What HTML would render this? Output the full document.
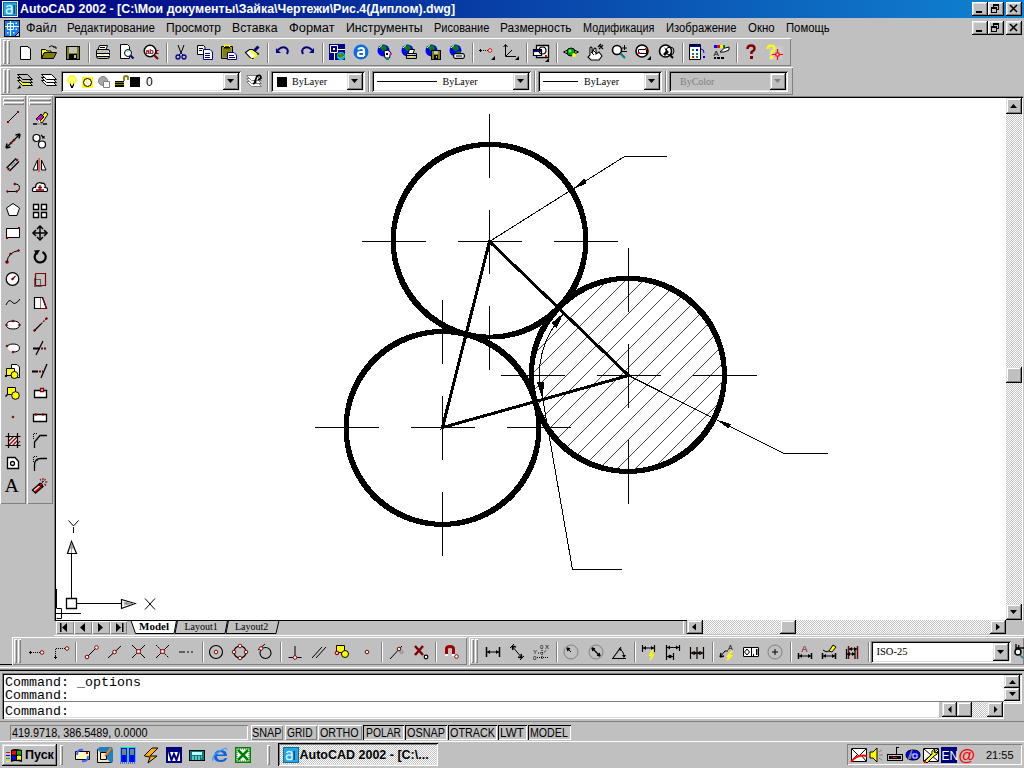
<!DOCTYPE html>
<html><head><meta charset="utf-8">
<style>
*{box-sizing:border-box}
html,body{margin:0;padding:0;width:1024px;height:768px;overflow:hidden;background:#c0c0c0;font-family:"Liberation Sans",sans-serif;font-size:11.5px;color:#000}
.a{position:absolute}
#title{left:0;top:0;width:1024px;height:18px;background:linear-gradient(to right,#000080,#1084d0)}
#ttext{left:20px;top:1px;color:#fff;font-weight:bold;font-size:12.4px;white-space:pre;line-height:16px}
.wb{width:16px;height:14px;background:#c0c0c0;box-shadow:inset -1px -1px #000,inset 1px 1px #fff,inset -2px -2px #808080,inset 2px 2px #dfdfdf}
.menu{top:20.5px;white-space:pre;line-height:14px;font-size:12px;transform-origin:0 0}
.tb{background:#c0c0c0;box-shadow:inset 1px 1px #fff,inset -1px -1px #808080}
.combo{background:#fff;box-shadow:inset 1px 1px #808080,inset -1px -1px #fff,inset 2px 2px #000,inset -2px -2px #dfdfdf}
.dither{background:repeating-conic-gradient(#c0c0c0 0% 25%,#fff 0% 50%) 0 0/2px 2px}
.btn{background:#c0c0c0;box-shadow:inset -1px -1px #000,inset 1px 1px #dfdfdf,inset -2px -2px #808080,inset 2px 2px #fff}
.mono{font-family:"Liberation Mono",monospace}
.sb{height:15px;box-shadow:inset 1px 1px #fff,inset -1px -1px #808080;font-size:10.75px;line-height:16px;text-align:center;white-space:pre}
.sbp{height:15px;box-shadow:inset 1px 1px #000,inset -1px -1px #fff;font-size:10.75px;line-height:16px;text-align:center;white-space:pre}
svg{position:absolute;overflow:visible}
</style></head><body>
<div id="title" class="a"></div>
<div class="a " style="left:2px;top:1px;width:16px;height:16px;background:#fff"></div>
<div id="ttext" class="a">AutoCAD 2002 - [C:\Мои документы\Зайка\Чертежи\Рис.4(Диплом).dwg]</div>
<div class="a wb" style="left:972px;top:2px;width:16px;height:14px;"></div>
<div class="a wb" style="left:988px;top:2px;width:16px;height:14px;"></div>
<div class="a wb" style="left:1006px;top:2px;width:16px;height:14px;"></div>
<div class="a menu" style="left:25.5px;transform:scaleX(1.044)">Файл</div>
<div class="a menu" style="left:67.0px;transform:scaleX(0.962)">Редактирование</div>
<div class="a menu" style="left:166.0px;transform:scaleX(1.005)">Просмотр</div>
<div class="a menu" style="left:232.2px;transform:scaleX(1.020)">Вставка</div>
<div class="a menu" style="left:289.3px;transform:scaleX(1.070)">Формат</div>
<div class="a menu" style="left:345.9px;transform:scaleX(1.024)">Инструменты</div>
<div class="a menu" style="left:433.5px;transform:scaleX(0.914)">Рисование</div>
<div class="a menu" style="left:500.2px;transform:scaleX(0.989)">Размерность</div>
<div class="a menu" style="left:583.2px;transform:scaleX(0.904)">Модификация</div>
<div class="a menu" style="left:666.2px;transform:scaleX(0.933)">Изображение</div>
<div class="a menu" style="left:748.3px;transform:scaleX(0.953)">Окно</div>
<div class="a menu" style="left:786.0px;transform:scaleX(0.942)">Помощь</div>
<div class="a wb" style="left:972px;top:21px;width:16px;height:14px;"></div>
<div class="a wb" style="left:988px;top:21px;width:16px;height:14px;"></div>
<div class="a wb" style="left:1006px;top:21px;width:16px;height:14px;"></div>
<div class="a tb" style="left:0px;top:38px;width:791px;height:28px;"></div>
<div class="a tb" style="left:0px;top:67px;width:793px;height:28px;"></div>
<div class="a tb" style="left:0px;top:95px;width:26px;height:409px;"></div>
<div class="a tb" style="left:27px;top:95px;width:26px;height:409px;"></div>
<div class="a " style="left:54px;top:96px;width:969px;height:525px;background:#fff;box-shadow:inset 1px 1px #808080,inset 2px 2px #000"></div>
<div class="a dither" style="left:1006px;top:98px;width:16px;height:522px;"></div>
<div class="a btn" style="left:1006px;top:98px;width:16px;height:16px;"></div>
<div class="a btn" style="left:1006px;top:367px;width:16px;height:16px;"></div>
<div class="a btn" style="left:1006px;top:604px;width:16px;height:16px;"></div>
<svg class="a" style="left:1006px;top:98px" width="16" height="522"><path d="M4 10h7l-3.5-4z" fill="#000"/><path d="M4 512h7l-3.5 4z" fill="#000"/></svg>
<div class="a " style="left:56px;top:620px;width:950px;height:1px;background:#000"></div>
<div class="a " style="left:56px;top:621px;width:627px;height:13px;background:#c0c0c0"></div>
<div class="a " style="left:56px;top:621px;width:18px;height:13px;background:#c0c0c0;box-shadow:inset 1px 1px #fff,inset -1px -1px #808080"></div>
<div class="a " style="left:74px;top:621px;width:18px;height:13px;background:#c0c0c0;box-shadow:inset 1px 1px #fff,inset -1px -1px #808080"></div>
<div class="a " style="left:92px;top:621px;width:18px;height:13px;background:#c0c0c0;box-shadow:inset 1px 1px #fff,inset -1px -1px #808080"></div>
<div class="a " style="left:110px;top:621px;width:17px;height:13px;background:#c0c0c0;box-shadow:inset 1px 1px #fff,inset -1px -1px #808080"></div>
<svg class="a" style="left:56px;top:621px" width="72" height="13"><g fill="#000"><rect x="4" y="2" width="1.5" height="9"/><path d="M11 2v9l-5-4.5z"/><path d="M29 2v9l-5-4.5z"/><path d="M42 2v9l5-4.5z"/><path d="M60 2v9l5-4.5z"/><rect x="66" y="2" width="1.5" height="9"/></g></svg>
<svg class="a" style="left:126px;top:619px" width="160" height="16">
<path d="M51.5 1.5H101.5L99 14.5H49Z" fill="#c0c0c0" stroke="#000"/>
<path d="M102.5 1.5H153L150 14.5H100Z" fill="#c0c0c0" stroke="#000"/>
<path d="M5 1.5H50.5L48 14.5H9.5Z" fill="#fff" stroke="#000"/>
</svg>
<div class="a" style="left:139px;top:620px;white-space:pre;font-family:'Liberation Serif',serif;font-weight:bold;font-size:11px;line-height:12px">Model</div>
<div class="a" style="left:184.5px;top:620.5px;white-space:pre;font-family:'Liberation Serif',serif;font-size:10px;line-height:12px">Layout1</div>
<div class="a" style="left:235px;top:620.5px;white-space:pre;font-family:'Liberation Serif',serif;font-size:10px;line-height:12px">Layout2</div>
<div class="a " style="left:683px;top:621px;width:4px;height:13px;box-shadow:inset 1px 0 #fff,inset -1px 0 #808080"></div>
<div class="a dither" style="left:687px;top:620px;width:319px;height:14px;"></div>
<div class="a btn" style="left:687px;top:620px;width:16px;height:14px;"></div>
<div class="a btn" style="left:780px;top:620px;width:16px;height:14px;"></div>
<div class="a btn" style="left:990px;top:620px;width:16px;height:14px;"></div>
<svg class="a" style="left:687px;top:620px" width="320" height="14"><path d="M9 3.5v7l-4-3.5z" fill="#000"/><path d="M309 3.5v7l4-3.5z" fill="#000"/></svg>
<div class="a " style="left:1006px;top:620px;width:16px;height:14px;background:#c0c0c0"></div>
<div class="a " style="left:54px;top:635px;width:970px;height:1px;background:#fff"></div>
<div class="a tb" style="left:12px;top:637px;width:455px;height:28px;"></div>
<div class="a tb" style="left:469px;top:637px;width:555px;height:28px;"></div>
<div class="a " style="left:0px;top:664px;width:12px;height:1px;background:#000"></div>
<div class="a " style="left:0px;top:667px;width:1024px;height:1px;background:#fff"></div>
<div class="a " style="left:0px;top:669px;width:1024px;height:1px;background:#808080"></div>
<div class="a " style="left:0px;top:670px;width:1024px;height:1px;background:#000"></div>
<div class="a " style="left:2px;top:673px;width:1020px;height:31px;background:#fff;box-shadow:inset 1px 1px #808080,inset 2px 2px #000,inset -1px -1px #fff,inset -2px -2px #dfdfdf"></div>
<div class="a " style="left:2px;top:701px;width:1002px;height:18px;background:#fff;box-shadow:inset 1px 0 #808080,inset 2px 0 #000,inset 0 -1px #fff,inset 0 -2px #dfdfdf,inset 0 1px #808080"></div>
<div class="a " style="left:939px;top:702px;width:3px;height:15px;background:#c0c0c0"></div>
<div class="a" style="left:5px;top:676px;white-space:pre;font-family:'Liberation Mono',monospace;font-size:13.33px;line-height:13px">Command: _options
Command:</div>
<div class="a" style="left:5px;top:705px;white-space:pre;font-family:'Liberation Mono',monospace;font-size:13.33px;line-height:13px">Command:</div>
<div class="a btn" style="left:1004px;top:675px;width:16px;height:13px;"></div>
<div class="a btn" style="left:1004px;top:688px;width:16px;height:13px;"></div>
<div class="a btn" style="left:942px;top:702px;width:15px;height:15px;"></div>
<div class="a btn" style="left:957px;top:702px;width:15px;height:15px;"></div>
<div class="a dither" style="left:972px;top:702px;width:15px;height:15px;"></div>
<div class="a btn" style="left:987px;top:702px;width:16px;height:15px;"></div>
<svg class="a" style="left:942px;top:675px" width="80" height="45"><g fill="#000"><path d="M67 9h7l-3.5-4z"/><path d="M67 17h7l-3.5 4z"/><path d="M9.5 31v7l-3.5-3.5z"/><path d="M52 31v7l3.5-3.5z"/></g></svg>
<div class="a " style="left:0px;top:721px;width:1024px;height:1px;background:#808080"></div>
<div class="a " style="left:10px;top:725px;width:238px;height:15px;box-shadow:inset 1px 1px #808080,inset -1px -1px #fff"></div>
<div class="a" style="left:11.8px;top:726px;white-space:pre;font-size:12.5px;line-height:14px;transform:scaleX(0.866);transform-origin:0 0">419.9718, 386.5489, 0.0000</div>
<div class="a sb" style="left:250.5px;top:725px;width:32.5px"></div>
<div class="a" style="left:251.8px;top:726px;white-space:pre;font-size:12.5px;line-height:14px;transform:scaleX(0.866);transform-origin:0 0">SNAP</div>
<div class="a sb" style="left:285px;top:725px;width:31.5px"></div>
<div class="a" style="left:287.3px;top:726px;white-space:pre;font-size:12.5px;line-height:14px;transform:scaleX(0.819);transform-origin:0 0">GRID</div>
<div class="a sb" style="left:318px;top:725px;width:43.5px"></div>
<div class="a" style="left:319.8px;top:726px;white-space:pre;font-size:12.5px;line-height:14px;transform:scaleX(0.857);transform-origin:0 0">ORTHO</div>
<div class="a sbp" style="left:363px;top:725px;width:40.5px"></div>
<div class="a" style="left:366.3px;top:726px;white-space:pre;font-size:12.5px;line-height:14px;transform:scaleX(0.825);transform-origin:0 0">POLAR</div>
<div class="a sbp" style="left:405px;top:725px;width:41.5px"></div>
<div class="a" style="left:407.2px;top:726px;white-space:pre;font-size:12.5px;line-height:14px;transform:scaleX(0.866);transform-origin:0 0">OSNAP</div>
<div class="a sbp" style="left:447.5px;top:725px;width:49.0px"></div>
<div class="a" style="left:450.3px;top:726px;white-space:pre;font-size:12.5px;line-height:14px;transform:scaleX(0.862);transform-origin:0 0">OTRACK</div>
<div class="a sbp" style="left:498px;top:725px;width:28.5px"></div>
<div class="a" style="left:500.3px;top:726px;white-space:pre;font-size:12.5px;line-height:14px;transform:scaleX(0.936);transform-origin:0 0">LWT</div>
<div class="a sbp" style="left:528px;top:725px;width:42.5px"></div>
<div class="a" style="left:530.3px;top:726px;white-space:pre;font-size:12.5px;line-height:14px;transform:scaleX(0.85);transform-origin:0 0">MODEL</div>
<div class="a " style="left:0px;top:741px;width:1024px;height:1px;background:#fff"></div>
<div class="a btn" style="left:2px;top:744px;width:55px;height:22px;"></div>
<div class="a" style="left:25px;top:747px;white-space:pre;font-weight:bold;font-size:12.5px;line-height:16px">Пуск</div>
<div class="a dither" style="left:278px;top:743px;width:160px;height:23px;"></div>
<div class="a " style="left:278px;top:743px;width:160px;height:23px;box-shadow:inset 1px 1px #000,inset -1px -1px #fff,inset 2px 2px #808080,inset -2px -2px #dfdfdf"></div>
<div class="a" style="left:299.5px;top:747px;white-space:pre;font-weight:bold;font-size:12.5px;line-height:16px">AutoCAD 2002 - [C:\...</div>
<div class="a " style="left:847px;top:744px;width:175px;height:21px;box-shadow:inset 1px 1px #808080,inset -1px -1px #fff"></div>
<div class="a" style="left:986px;top:747px;white-space:pre;font-size:11px;line-height:16px">21:55</div>
<div class="a " style="left:3px;top:40px;width:3px;height:24px;box-shadow:inset 1px 1px #fff,inset -1px -1px #808080"></div>
<div class="a " style="left:7px;top:40px;width:3px;height:24px;box-shadow:inset 1px 1px #fff,inset -1px -1px #808080"></div>
<div class="a " style="left:88px;top:43px;width:2px;height:20px;box-shadow:inset 1px 0 #808080,inset -1px 0 #fff"></div>
<div class="a " style="left:166px;top:43px;width:2px;height:20px;box-shadow:inset 1px 0 #808080,inset -1px 0 #fff"></div>
<div class="a " style="left:267px;top:43px;width:2px;height:20px;box-shadow:inset 1px 0 #808080,inset -1px 0 #fff"></div>
<div class="a " style="left:322px;top:43px;width:2px;height:20px;box-shadow:inset 1px 0 #808080,inset -1px 0 #fff"></div>
<div class="a " style="left:472px;top:43px;width:2px;height:20px;box-shadow:inset 1px 0 #808080,inset -1px 0 #fff"></div>
<div class="a " style="left:526px;top:43px;width:2px;height:20px;box-shadow:inset 1px 0 #808080,inset -1px 0 #fff"></div>
<div class="a " style="left:556px;top:43px;width:2px;height:20px;box-shadow:inset 1px 0 #808080,inset -1px 0 #fff"></div>
<div class="a " style="left:682px;top:43px;width:2px;height:20px;box-shadow:inset 1px 0 #808080,inset -1px 0 #fff"></div>
<div class="a " style="left:736px;top:43px;width:2px;height:20px;box-shadow:inset 1px 0 #808080,inset -1px 0 #fff"></div>
<div class="a " style="left:3px;top:69px;width:3px;height:24px;box-shadow:inset 1px 1px #fff,inset -1px -1px #808080"></div>
<div class="a " style="left:7px;top:69px;width:3px;height:24px;box-shadow:inset 1px 1px #fff,inset -1px -1px #808080"></div>
<div class="a " style="left:61px;top:71px;width:180px;height:21px;background:#fff;box-shadow:inset 1px 1px #808080,inset -1px -1px #fff,inset 2px 2px #000,inset -2px -2px #dfdfdf"></div>
<div class="a btn" style="left:223px;top:73px;width:16px;height:17px;"></div>
<svg class="a" style="left:223px;top:73px" width="16" height="17"><path d="M4 6h7l-3.5 4z" fill="#000"/></svg>
<div class="a " style="left:130px;top:77px;width:10px;height:10px;background:#000"></div>
<div class="a" style="left:146px;top:75px;white-space:pre;font-size:12px;line-height:14px">0</div>
<div class="a " style="left:267px;top:71px;width:2px;height:21px;box-shadow:inset 1px 0 #808080,inset -1px 0 #fff"></div>
<div class="a " style="left:271px;top:71px;width:94px;height:21px;background:#fff;box-shadow:inset 1px 1px #808080,inset -1px -1px #fff,inset 2px 2px #000,inset -2px -2px #dfdfdf"></div>
<div class="a btn" style="left:347px;top:73px;width:16px;height:17px;"></div>
<svg class="a" style="left:347px;top:73px" width="16" height="17"><path d="M4 6h7l-3.5 4z" fill="#000"/></svg>
<div class="a " style="left:277px;top:77px;width:10px;height:10px;background:#000"></div>
<div class="a" style="left:292px;top:76px;white-space:pre;font-family:'Liberation Serif',serif;font-size:10px;line-height:12px">ByLayer</div>
<div class="a " style="left:368px;top:71px;width:2px;height:21px;box-shadow:inset 1px 0 #808080,inset -1px 0 #fff"></div>
<div class="a " style="left:372px;top:71px;width:159px;height:21px;background:#fff;box-shadow:inset 1px 1px #808080,inset -1px -1px #fff,inset 2px 2px #000,inset -2px -2px #dfdfdf"></div>
<div class="a btn" style="left:513px;top:73px;width:16px;height:17px;"></div>
<svg class="a" style="left:513px;top:73px" width="16" height="17"><path d="M4 6h7l-3.5 4z" fill="#000"/></svg>
<div class="a " style="left:377px;top:81px;width:60px;height:1px;background:#000"></div>
<div class="a" style="left:442.5px;top:76px;white-space:pre;font-family:'Liberation Serif',serif;font-size:10px;line-height:12px">ByLayer</div>
<div class="a " style="left:534px;top:71px;width:2px;height:21px;box-shadow:inset 1px 0 #808080,inset -1px 0 #fff"></div>
<div class="a " style="left:538px;top:71px;width:124px;height:21px;background:#fff;box-shadow:inset 1px 1px #808080,inset -1px -1px #fff,inset 2px 2px #000,inset -2px -2px #dfdfdf"></div>
<div class="a btn" style="left:644px;top:73px;width:16px;height:17px;"></div>
<svg class="a" style="left:644px;top:73px" width="16" height="17"><path d="M4 6h7l-3.5 4z" fill="#000"/></svg>
<div class="a " style="left:543px;top:81px;width:35px;height:1px;background:#000"></div>
<div class="a" style="left:584px;top:76px;white-space:pre;font-family:'Liberation Serif',serif;font-size:10px;line-height:12px">ByLayer</div>
<div class="a " style="left:665px;top:71px;width:2px;height:21px;box-shadow:inset 1px 0 #808080,inset -1px 0 #fff"></div>
<div class="a " style="left:669px;top:71px;width:119px;height:21px;background:#c0c0c0;box-shadow:inset 1px 1px #808080,inset -1px -1px #fff,inset 2px 2px #000,inset -2px -2px #dfdfdf"></div>
<div class="a btn" style="left:770px;top:73px;width:16px;height:17px;"></div>
<svg class="a" style="left:770px;top:73px" width="16" height="17"><path d="M4 6h7l-3.5 4z" fill="#808080"/></svg>
<div class="a" style="left:680px;top:76px;white-space:pre;font-family:'Liberation Serif',serif;font-size:10px;line-height:12px;color:#808080">ByColor</div>
<div class="a " style="left:3px;top:98px;width:21px;height:3px;box-shadow:inset 1px 1px #fff,inset -1px -1px #808080"></div>
<div class="a " style="left:3px;top:102px;width:21px;height:3px;box-shadow:inset 1px 1px #fff,inset -1px -1px #808080"></div>
<div class="a " style="left:29px;top:98px;width:22px;height:3px;box-shadow:inset 1px 1px #fff,inset -1px -1px #808080"></div>
<div class="a " style="left:29px;top:102px;width:22px;height:3px;box-shadow:inset 1px 1px #fff,inset -1px -1px #808080"></div>
<div class="a " style="left:14px;top:639px;width:3px;height:24px;box-shadow:inset 1px 1px #fff,inset -1px -1px #808080"></div>
<div class="a " style="left:18px;top:639px;width:3px;height:24px;box-shadow:inset 1px 1px #fff,inset -1px -1px #808080"></div>
<div class="a " style="left:75px;top:642px;width:2px;height:20px;box-shadow:inset 1px 0 #808080,inset -1px 0 #fff"></div>
<div class="a " style="left:202px;top:642px;width:2px;height:20px;box-shadow:inset 1px 0 #808080,inset -1px 0 #fff"></div>
<div class="a " style="left:280px;top:642px;width:2px;height:20px;box-shadow:inset 1px 0 #808080,inset -1px 0 #fff"></div>
<div class="a " style="left:381px;top:642px;width:2px;height:20px;box-shadow:inset 1px 0 #808080,inset -1px 0 #fff"></div>
<div class="a " style="left:435px;top:642px;width:2px;height:20px;box-shadow:inset 1px 0 #808080,inset -1px 0 #fff"></div>
<div class="a " style="left:471px;top:639px;width:3px;height:24px;box-shadow:inset 1px 1px #fff,inset -1px -1px #808080"></div>
<div class="a " style="left:475px;top:639px;width:3px;height:24px;box-shadow:inset 1px 1px #fff,inset -1px -1px #808080"></div>
<div class="a " style="left:556px;top:642px;width:2px;height:20px;box-shadow:inset 1px 0 #808080,inset -1px 0 #fff"></div>
<div class="a " style="left:634px;top:642px;width:2px;height:20px;box-shadow:inset 1px 0 #808080,inset -1px 0 #fff"></div>
<div class="a " style="left:712px;top:642px;width:2px;height:20px;box-shadow:inset 1px 0 #808080,inset -1px 0 #fff"></div>
<div class="a " style="left:790px;top:642px;width:2px;height:20px;box-shadow:inset 1px 0 #808080,inset -1px 0 #fff"></div>
<div class="a " style="left:868px;top:642px;width:2px;height:20px;box-shadow:inset 1px 0 #808080,inset -1px 0 #fff"></div>
<div class="a " style="left:871px;top:641px;width:140px;height:22px;background:#fff;box-shadow:inset 1px 1px #808080,inset -1px -1px #fff,inset 2px 2px #000,inset -2px -2px #dfdfdf"></div>
<div class="a btn" style="left:993px;top:643px;width:16px;height:18px;"></div>
<svg class="a" style="left:993px;top:643px" width="16" height="18"><path d="M4 7h7l-3.5 4z" fill="#000"/></svg>
<div class="a" style="left:876.5px;top:645px;white-space:pre;font-family:'Liberation Serif',serif;font-size:10.5px;line-height:14px">ISO-25</div>
<div class="a " style="left:60px;top:745px;width:3px;height:20px;box-shadow:inset 1px 1px #fff,inset -1px -1px #808080"></div>
<div class="a " style="left:267px;top:745px;width:3px;height:20px;box-shadow:inset 1px 1px #fff,inset -1px -1px #808080"></div>
<svg class="a" style="left:0;top:0" width="1024" height="768" viewBox="0 0 1024 768">
<defs><clipPath id="dc"><rect x="56" y="98" width="950" height="522"/></clipPath>
<clipPath id="c3"><circle cx="627.9" cy="374.85" r="96.5"/></clipPath></defs>
<g clip-path="url(#dc)" fill="none" stroke="#000" shape-rendering="crispEdges">
<path d="M460.20 265.50L240.20 485.50M478.20 265.50L258.20 485.50M496.20 265.50L276.20 485.50M514.20 265.50L294.20 485.50M532.20 265.50L312.20 485.50M550.20 265.50L330.20 485.50M568.20 265.50L348.20 485.50M586.20 265.50L366.20 485.50M604.20 265.50L384.20 485.50M622.20 265.50L402.20 485.50M640.20 265.50L420.20 485.50M658.20 265.50L438.20 485.50M676.20 265.50L456.20 485.50M694.20 265.50L474.20 485.50M712.20 265.50L492.20 485.50M730.20 265.50L510.20 485.50M748.20 265.50L528.20 485.50M766.20 265.50L546.20 485.50M784.20 265.50L564.20 485.50M802.20 265.50L582.20 485.50M820.20 265.50L600.20 485.50M838.20 265.50L618.20 485.50M856.20 265.50L636.20 485.50M874.20 265.50L654.20 485.50M892.20 265.50L672.20 485.50M910.20 265.50L690.20 485.50M928.20 265.50L708.20 485.50M946.20 265.50L726.20 485.50M964.20 265.50L744.20 485.50M982.20 265.50L762.20 485.50M1000.20 265.50L780.20 485.50M1018.20 265.50L798.20 485.50M1036.20 265.50L816.20 485.50M1054.20 265.50L834.20 485.50M1072.20 265.50L852.20 485.50M1090.20 265.50L870.20 485.50M1108.20 265.50L888.20 485.50M1126.20 265.50L906.20 485.50M1144.20 265.50L924.20 485.50M1162.20 265.50L942.20 485.50" stroke-width="0.72" clip-path="url(#c3)"/>
<path d="M361.5 241.5H425.5M489.5 113.5V177.5M457.5 241.5H521.5M489.5 209.5V273.5M553.5 241.5H617.5M489.5 305.5V369.5M314.5 427.5H378.5M442.5 299.5V363.5M410.5 427.5H474.5M442.5 395.5V459.5M506.5 427.5H570.5M442.5 491.5V555.5M500.5 375.5H564.5M628.5 247.5V311.5M596.5 375.5H660.5M628.5 343.5V407.5M692.5 375.5H756.5M628.5 439.5V503.5" stroke-width="1"/>
<path d="M588.20 240.75L588.21 242.47L588.19 244.20L588.15 245.92L588.07 247.64L587.96 249.36L587.82 251.08L587.65 252.80L587.44 254.52L587.21 256.23L586.95 257.93L586.66 259.64L586.33 261.33L585.98 263.02L585.60 264.71L585.18 266.39L584.74 268.06L584.27 269.72L583.77 271.38L583.23 273.02L582.67 274.66L582.08 276.29L581.46 277.90L580.81 279.51L580.14 281.10L579.43 282.68L578.70 284.25L577.93 285.81L577.14 287.35L576.33 288.88L575.48 290.39L574.61 291.89L573.72 293.37L572.79 294.84L571.84 296.29L570.87 297.72L569.86 299.14L568.84 300.53L567.79 301.91L566.71 303.27L565.61 304.61L564.49 305.93L563.34 307.23L562.17 308.51L560.98 309.77L559.76 311.01L558.52 312.23L557.26 313.42L555.98 314.59L554.68 315.74L553.36 316.86L552.02 317.96L550.66 319.04L549.28 320.09L547.89 321.11L546.47 322.12L545.04 323.09L543.59 324.04L542.12 324.97L540.64 325.86L539.14 326.73L537.63 327.58L536.10 328.39L534.56 329.18L533.00 329.95L531.43 330.68L529.85 331.39L528.26 332.06L526.65 332.71L525.04 333.33L523.41 333.92L521.77 334.48L520.13 335.02L518.47 335.52L516.81 335.99L515.14 336.43L513.46 336.85L511.77 337.23L510.08 337.58L508.39 337.91L506.68 338.20L504.98 338.46L503.27 338.69L501.55 338.90L499.83 339.07L498.11 339.21L496.39 339.32L494.67 339.40L492.95 339.44L491.22 339.46L489.50 339.45L487.78 339.46L486.05 339.44L484.33 339.40L482.61 339.32L480.89 339.21L479.17 339.07L477.45 338.90L475.73 338.69L474.02 338.46L472.32 338.20L470.61 337.91L468.92 337.58L467.23 337.23L465.54 336.85L463.86 336.43L462.19 335.99L460.53 335.52L458.87 335.02L457.23 334.48L455.59 333.92L453.96 333.33L452.35 332.71L450.74 332.06L449.15 331.39L447.57 330.68L446.00 329.95L444.44 329.18L442.90 328.39L441.37 327.58L439.86 326.73L438.36 325.86L436.88 324.97L435.41 324.04L433.96 323.09L432.53 322.12L431.11 321.11L429.72 320.09L428.34 319.04L426.98 317.96L425.64 316.86L424.32 315.74L423.02 314.59L421.74 313.42L420.48 312.23L419.24 311.01L418.02 309.77L416.83 308.51L415.66 307.23L414.51 305.93L413.39 304.61L412.29 303.27L411.21 301.91L410.16 300.53L409.14 299.14L408.13 297.72L407.16 296.29L406.21 294.84L405.28 293.37L404.39 291.89L403.52 290.39L402.67 288.88L401.86 287.35L401.07 285.81L400.30 284.25L399.57 282.68L398.86 281.10L398.19 279.51L397.54 277.90L396.92 276.29L396.33 274.66L395.77 273.02L395.23 271.38L394.73 269.72L394.26 268.06L393.82 266.39L393.40 264.71L393.02 263.02L392.67 261.33L392.34 259.64L392.05 257.93L391.79 256.23L391.56 254.52L391.35 252.80L391.18 251.08L391.04 249.36L390.93 247.64L390.85 245.92L390.81 244.20L390.79 242.47L390.80 240.75L390.79 239.03L390.81 237.30L390.85 235.58L390.93 233.86L391.04 232.14L391.18 230.42L391.35 228.70L391.56 226.98L391.79 225.27L392.05 223.57L392.34 221.86L392.67 220.17L393.02 218.48L393.40 216.79L393.82 215.11L394.26 213.44L394.73 211.78L395.23 210.12L395.77 208.48L396.33 206.84L396.92 205.21L397.54 203.60L398.19 201.99L398.86 200.40L399.57 198.82L400.30 197.25L401.07 195.69L401.86 194.15L402.67 192.62L403.52 191.11L404.39 189.61L405.28 188.13L406.21 186.66L407.16 185.21L408.13 183.78L409.14 182.36L410.16 180.97L411.21 179.59L412.29 178.23L413.39 176.89L414.51 175.57L415.66 174.27L416.83 172.99L418.02 171.73L419.24 170.49L420.48 169.27L421.74 168.08L423.02 166.91L424.32 165.76L425.64 164.64L426.98 163.54L428.34 162.46L429.72 161.41L431.11 160.39L432.53 159.38L433.96 158.41L435.41 157.46L436.88 156.53L438.36 155.64L439.86 154.77L441.37 153.92L442.90 153.11L444.44 152.32L446.00 151.55L447.57 150.82L449.15 150.11L450.74 149.44L452.35 148.79L453.96 148.17L455.59 147.58L457.23 147.02L458.87 146.48L460.53 145.98L462.19 145.51L463.86 145.07L465.54 144.65L467.23 144.27L468.92 143.92L470.61 143.59L472.32 143.30L474.02 143.04L475.73 142.81L477.45 142.60L479.17 142.43L480.89 142.29L482.61 142.18L484.33 142.10L486.05 142.06L487.78 142.04L489.50 142.05L491.22 142.04L492.95 142.06L494.67 142.10L496.39 142.18L498.11 142.29L499.83 142.43L501.55 142.60L503.27 142.81L504.98 143.04L506.68 143.30L508.39 143.59L510.08 143.92L511.77 144.27L513.46 144.65L515.14 145.07L516.81 145.51L518.47 145.98L520.13 146.48L521.77 147.02L523.41 147.58L525.04 148.17L526.65 148.79L528.26 149.44L529.85 150.11L531.43 150.82L533.00 151.55L534.56 152.32L536.10 153.11L537.63 153.92L539.14 154.77L540.64 155.64L542.12 156.53L543.59 157.46L545.04 158.41L546.47 159.38L547.89 160.39L549.28 161.41L550.66 162.46L552.02 163.54L553.36 164.64L554.68 165.76L555.98 166.91L557.26 168.08L558.52 169.27L559.76 170.49L560.98 171.73L562.17 172.99L563.34 174.27L564.49 175.57L565.61 176.89L566.71 178.23L567.79 179.59L568.84 180.97L569.86 182.36L570.87 183.78L571.84 185.21L572.79 186.66L573.72 188.13L574.61 189.61L575.48 191.11L576.33 192.62L577.14 194.15L577.93 195.69L578.70 197.25L579.43 198.82L580.14 200.40L580.81 201.99L581.46 203.60L582.08 205.21L582.67 206.84L583.23 208.48L583.77 210.12L584.27 211.78L584.74 213.44L585.18 215.11L585.60 216.79L585.98 218.48L586.33 220.17L586.66 221.86L586.95 223.57L587.21 225.27L587.44 226.98L587.65 228.70L587.82 230.42L587.96 232.14L588.07 233.86L588.15 235.58L588.19 237.30L588.21 239.03Z M583.36 239.11L583.29 237.47L583.19 235.84L583.06 234.21L582.91 232.58L582.73 230.95L582.52 229.33L582.28 227.71L582.02 226.10L581.72 224.49L581.40 222.89L581.06 221.29L580.68 219.70L580.28 218.12L579.85 216.54L579.40 214.97L578.92 213.41L578.41 211.86L577.87 210.32L577.31 208.79L576.73 207.27L576.11 205.76L575.48 204.25L574.81 202.77L574.13 201.29L573.41 199.82L572.67 198.37L571.91 196.93L571.12 195.51L570.31 194.09L569.48 192.69L568.62 191.31L567.74 189.94L566.83 188.59L565.90 187.25L564.95 185.93L563.98 184.63L562.99 183.34L561.97 182.07L560.93 180.81L559.87 179.58L558.79 178.36L557.69 177.16L556.57 175.98L555.43 174.82L554.27 173.68L553.09 172.56L551.89 171.46L550.67 170.38L549.44 169.32L548.18 168.28L546.91 167.26L545.62 166.27L544.32 165.30L543.00 164.35L541.66 163.42L540.31 162.51L538.94 161.63L537.56 160.77L536.16 159.94L534.74 159.13L533.32 158.34L531.88 157.58L530.43 156.84L528.96 156.12L527.48 155.44L526.00 154.77L524.49 154.14L522.98 153.52L521.46 152.94L519.93 152.38L518.39 151.84L516.84 151.33L515.28 150.85L513.71 150.40L512.13 149.97L510.55 149.57L508.96 149.19L507.36 148.85L505.76 148.53L504.15 148.23L502.54 147.97L500.92 147.73L499.30 147.52L497.67 147.34L496.04 147.19L494.41 147.06L492.78 146.96L491.14 146.89L489.50 146.85L487.86 146.89L486.22 146.96L484.59 147.06L482.96 147.19L481.33 147.34L479.70 147.52L478.08 147.73L476.46 147.97L474.85 148.23L473.24 148.53L471.64 148.85L470.04 149.19L468.45 149.57L466.87 149.97L465.29 150.40L463.72 150.85L462.16 151.33L460.61 151.84L459.07 152.38L457.54 152.94L456.02 153.52L454.51 154.14L453.00 154.77L451.52 155.44L450.04 156.12L448.57 156.84L447.12 157.58L445.68 158.34L444.26 159.13L442.84 159.94L441.44 160.77L440.06 161.63L438.69 162.51L437.34 163.42L436.00 164.35L434.68 165.30L433.38 166.27L432.09 167.26L430.82 168.28L429.56 169.32L428.33 170.38L427.11 171.46L425.91 172.56L424.73 173.68L423.57 174.82L422.43 175.98L421.31 177.16L420.21 178.36L419.13 179.58L418.07 180.81L417.03 182.07L416.01 183.34L415.02 184.63L414.05 185.93L413.10 187.25L412.17 188.59L411.26 189.94L410.38 191.31L409.52 192.69L408.69 194.09L407.88 195.51L407.09 196.93L406.33 198.37L405.59 199.82L404.87 201.29L404.19 202.77L403.52 204.25L402.89 205.76L402.27 207.27L401.69 208.79L401.13 210.32L400.59 211.86L400.08 213.41L399.60 214.97L399.15 216.54L398.72 218.12L398.32 219.70L397.94 221.29L397.60 222.89L397.28 224.49L396.98 226.10L396.72 227.71L396.48 229.33L396.27 230.95L396.09 232.58L395.94 234.21L395.81 235.84L395.71 237.47L395.64 239.11L395.60 240.75L395.64 242.39L395.71 244.03L395.81 245.66L395.94 247.29L396.09 248.92L396.27 250.55L396.48 252.17L396.72 253.79L396.98 255.40L397.28 257.01L397.60 258.61L397.94 260.21L398.32 261.80L398.72 263.38L399.15 264.96L399.60 266.53L400.08 268.09L400.59 269.64L401.13 271.18L401.69 272.71L402.27 274.23L402.89 275.74L403.52 277.25L404.19 278.73L404.87 280.21L405.59 281.68L406.33 283.13L407.09 284.57L407.88 285.99L408.69 287.41L409.52 288.81L410.38 290.19L411.26 291.56L412.17 292.91L413.10 294.25L414.05 295.57L415.02 296.87L416.01 298.16L417.03 299.43L418.07 300.69L419.13 301.92L420.21 303.14L421.31 304.34L422.43 305.52L423.57 306.68L424.73 307.82L425.91 308.94L427.11 310.04L428.33 311.12L429.56 312.18L430.82 313.22L432.09 314.24L433.38 315.23L434.68 316.20L436.00 317.15L437.34 318.08L438.69 318.99L440.06 319.87L441.44 320.73L442.84 321.56L444.26 322.37L445.68 323.16L447.12 323.92L448.57 324.66L450.04 325.38L451.52 326.06L453.00 326.73L454.51 327.36L456.02 327.98L457.54 328.56L459.07 329.12L460.61 329.66L462.16 330.17L463.72 330.65L465.29 331.10L466.87 331.53L468.45 331.93L470.04 332.31L471.64 332.65L473.24 332.97L474.85 333.27L476.46 333.53L478.08 333.77L479.70 333.98L481.33 334.16L482.96 334.31L484.59 334.44L486.22 334.54L487.86 334.61L489.50 334.65L491.14 334.61L492.78 334.54L494.41 334.44L496.04 334.31L497.67 334.16L499.30 333.98L500.92 333.77L502.54 333.53L504.15 333.27L505.76 332.97L507.36 332.65L508.96 332.31L510.55 331.93L512.13 331.53L513.71 331.10L515.28 330.65L516.84 330.17L518.39 329.66L519.93 329.12L521.46 328.56L522.98 327.98L524.49 327.36L526.00 326.73L527.48 326.06L528.96 325.38L530.43 324.66L531.88 323.92L533.32 323.16L534.74 322.37L536.16 321.56L537.56 320.73L538.94 319.87L540.31 318.99L541.66 318.08L543.00 317.15L544.32 316.20L545.62 315.23L546.91 314.24L548.18 313.22L549.44 312.18L550.67 311.12L551.89 310.04L553.09 308.94L554.27 307.82L555.43 306.68L556.57 305.52L557.69 304.34L558.79 303.14L559.87 301.92L560.93 300.69L561.97 299.43L562.99 298.16L563.98 296.87L564.95 295.57L565.90 294.25L566.83 292.91L567.74 291.56L568.62 290.19L569.48 288.81L570.31 287.41L571.12 285.99L571.91 284.57L572.67 283.13L573.41 281.68L574.13 280.21L574.81 278.73L575.48 277.25L576.11 275.74L576.73 274.23L577.31 272.71L577.87 271.18L578.41 269.64L578.92 268.09L579.40 266.53L579.85 264.96L580.28 263.38L580.68 261.80L581.06 260.21L581.40 258.61L581.72 257.01L582.02 255.40L582.28 253.79L582.52 252.17L582.73 250.55L582.91 248.92L583.06 247.29L583.19 245.66L583.29 244.03L583.36 242.39L583.40 240.75Z" fill="#000" stroke="none" fill-rule="evenodd"/>
<path d="M541.30 427.95L541.31 429.67L541.29 431.40L541.25 433.13L541.17 434.85L541.06 436.57L540.92 438.29L540.75 440.01L540.54 441.73L540.31 443.44L540.05 445.15L539.76 446.85L539.43 448.55L539.08 450.25L538.69 451.93L538.28 453.61L537.84 455.29L537.36 456.95L536.86 458.61L536.33 460.26L535.77 461.90L535.17 463.52L534.55 465.14L533.90 466.75L533.23 468.34L532.52 469.93L531.79 471.50L531.02 473.05L530.23 474.60L529.42 476.13L528.57 477.64L527.70 479.14L526.80 480.63L525.88 482.09L524.92 483.55L523.95 484.98L522.94 486.40L521.92 487.79L520.86 489.17L519.79 490.54L518.69 491.88L517.56 493.20L516.41 494.50L515.24 495.78L514.05 497.04L512.83 498.28L511.59 499.50L510.33 500.69L509.05 501.86L507.75 503.01L506.43 504.14L505.09 505.24L503.72 506.31L502.34 507.37L500.95 508.39L499.53 509.40L498.10 510.37L496.64 511.33L495.18 512.25L493.69 513.15L492.19 514.02L490.68 514.87L489.15 515.68L487.60 516.47L486.05 517.24L484.48 517.97L482.89 518.68L481.30 519.35L479.69 520.00L478.07 520.62L476.45 521.22L474.81 521.78L473.16 522.31L471.50 522.81L469.84 523.29L468.16 523.73L466.48 524.14L464.80 524.53L463.10 524.88L461.40 525.21L459.70 525.50L457.99 525.76L456.28 525.99L454.56 526.20L452.84 526.37L451.12 526.51L449.40 526.62L447.68 526.70L445.95 526.74L444.22 526.76L442.50 526.75L440.78 526.76L439.05 526.74L437.32 526.70L435.60 526.62L433.88 526.51L432.16 526.37L430.44 526.20L428.72 525.99L427.01 525.76L425.30 525.50L423.60 525.21L421.90 524.88L420.20 524.53L418.52 524.14L416.84 523.73L415.16 523.29L413.50 522.81L411.84 522.31L410.19 521.78L408.55 521.22L406.93 520.62L405.31 520.00L403.70 519.35L402.11 518.68L400.52 517.97L398.95 517.24L397.40 516.47L395.85 515.68L394.32 514.87L392.81 514.02L391.31 513.15L389.82 512.25L388.36 511.33L386.90 510.37L385.47 509.40L384.05 508.39L382.66 507.37L381.28 506.31L379.91 505.24L378.57 504.14L377.25 503.01L375.95 501.86L374.67 500.69L373.41 499.50L372.17 498.28L370.95 497.04L369.76 495.78L368.59 494.50L367.44 493.20L366.31 491.88L365.21 490.54L364.14 489.17L363.08 487.79L362.06 486.40L361.05 484.98L360.08 483.55L359.12 482.09L358.20 480.63L357.30 479.14L356.43 477.64L355.58 476.13L354.77 474.60L353.98 473.05L353.21 471.50L352.48 469.93L351.77 468.34L351.10 466.75L350.45 465.14L349.83 463.52L349.23 461.90L348.67 460.26L348.14 458.61L347.64 456.95L347.16 455.29L346.72 453.61L346.31 451.93L345.92 450.25L345.57 448.55L345.24 446.85L344.95 445.15L344.69 443.44L344.46 441.73L344.25 440.01L344.08 438.29L343.94 436.57L343.83 434.85L343.75 433.13L343.71 431.40L343.69 429.67L343.70 427.95L343.69 426.23L343.71 424.50L343.75 422.77L343.83 421.05L343.94 419.33L344.08 417.61L344.25 415.89L344.46 414.17L344.69 412.46L344.95 410.75L345.24 409.05L345.57 407.35L345.92 405.65L346.31 403.97L346.72 402.29L347.16 400.61L347.64 398.95L348.14 397.29L348.67 395.64L349.23 394.00L349.83 392.38L350.45 390.76L351.10 389.15L351.77 387.56L352.48 385.97L353.21 384.40L353.98 382.85L354.77 381.30L355.58 379.77L356.43 378.26L357.30 376.76L358.20 375.27L359.12 373.81L360.08 372.35L361.05 370.92L362.06 369.50L363.08 368.11L364.14 366.73L365.21 365.36L366.31 364.02L367.44 362.70L368.59 361.40L369.76 360.12L370.95 358.86L372.17 357.62L373.41 356.40L374.67 355.21L375.95 354.04L377.25 352.89L378.57 351.76L379.91 350.66L381.28 349.59L382.66 348.53L384.05 347.51L385.47 346.50L386.90 345.53L388.36 344.57L389.82 343.65L391.31 342.75L392.81 341.88L394.32 341.03L395.85 340.22L397.40 339.43L398.95 338.66L400.52 337.93L402.11 337.22L403.70 336.55L405.31 335.90L406.93 335.28L408.55 334.68L410.19 334.12L411.84 333.59L413.50 333.09L415.16 332.61L416.84 332.17L418.52 331.76L420.20 331.37L421.90 331.02L423.60 330.69L425.30 330.40L427.01 330.14L428.72 329.91L430.44 329.70L432.16 329.53L433.88 329.39L435.60 329.28L437.32 329.20L439.05 329.16L440.78 329.14L442.50 329.15L444.22 329.14L445.95 329.16L447.68 329.20L449.40 329.28L451.12 329.39L452.84 329.53L454.56 329.70L456.28 329.91L457.99 330.14L459.70 330.40L461.40 330.69L463.10 331.02L464.80 331.37L466.48 331.76L468.16 332.17L469.84 332.61L471.50 333.09L473.16 333.59L474.81 334.12L476.45 334.68L478.07 335.28L479.69 335.90L481.30 336.55L482.89 337.22L484.48 337.93L486.05 338.66L487.60 339.43L489.15 340.22L490.68 341.03L492.19 341.88L493.69 342.75L495.18 343.65L496.64 344.57L498.10 345.53L499.53 346.50L500.95 347.51L502.34 348.53L503.72 349.59L505.09 350.66L506.43 351.76L507.75 352.89L509.05 354.04L510.33 355.21L511.59 356.40L512.83 357.62L514.05 358.86L515.24 360.12L516.41 361.40L517.56 362.70L518.69 364.02L519.79 365.36L520.86 366.73L521.92 368.11L522.94 369.50L523.95 370.92L524.92 372.35L525.88 373.81L526.80 375.27L527.70 376.76L528.57 378.26L529.42 379.77L530.23 381.30L531.02 382.85L531.79 384.40L532.52 385.97L533.23 387.56L533.90 389.15L534.55 390.76L535.17 392.38L535.77 394.00L536.33 395.64L536.86 397.29L537.36 398.95L537.84 400.61L538.28 402.29L538.69 403.97L539.08 405.65L539.43 407.35L539.76 409.05L540.05 410.75L540.31 412.46L540.54 414.17L540.75 415.89L540.92 417.61L541.06 419.33L541.17 421.05L541.25 422.77L541.29 424.50L541.31 426.23Z M536.46 426.31L536.39 424.67L536.29 423.03L536.16 421.40L536.01 419.77L535.83 418.14L535.62 416.52L535.38 414.90L535.11 413.28L534.82 411.67L534.50 410.07L534.15 408.47L533.78 406.88L533.38 405.29L532.95 403.71L532.49 402.14L532.01 400.58L531.50 399.03L530.97 397.49L530.41 395.95L529.82 394.43L529.21 392.92L528.57 391.42L527.91 389.93L527.22 388.45L526.50 386.98L525.76 385.53L525.00 384.08L524.21 382.66L523.40 381.24L522.56 379.84L521.70 378.46L520.82 377.09L519.91 375.73L518.99 374.39L518.03 373.07L517.06 371.76L516.06 370.48L515.05 369.20L514.01 367.95L512.95 366.71L511.87 365.49L510.76 364.29L509.64 363.11L508.50 361.95L507.34 360.81L506.16 359.69L504.96 358.58L503.74 357.50L502.50 356.44L501.25 355.40L499.97 354.39L498.69 353.39L497.38 352.42L496.06 351.46L494.72 350.54L493.36 349.63L491.99 348.75L490.61 347.89L489.21 347.05L487.79 346.24L486.37 345.45L484.92 344.69L483.47 343.95L482.00 343.23L480.52 342.54L479.03 341.88L477.53 341.24L476.02 340.63L474.50 340.04L472.96 339.48L471.42 338.95L469.87 338.44L468.31 337.96L466.74 337.50L465.16 337.07L463.57 336.67L461.98 336.30L460.38 335.95L458.78 335.63L457.17 335.34L455.55 335.07L453.93 334.83L452.31 334.62L450.68 334.44L449.05 334.29L447.42 334.16L445.78 334.06L444.14 333.99L442.50 333.95L440.86 333.99L439.22 334.06L437.58 334.16L435.95 334.29L434.32 334.44L432.69 334.62L431.07 334.83L429.45 335.07L427.83 335.34L426.22 335.63L424.62 335.95L423.02 336.30L421.43 336.67L419.84 337.07L418.26 337.50L416.69 337.96L415.13 338.44L413.58 338.95L412.04 339.48L410.50 340.04L408.98 340.63L407.47 341.24L405.97 341.88L404.48 342.54L403.00 343.23L401.53 343.95L400.08 344.69L398.63 345.45L397.21 346.24L395.79 347.05L394.39 347.89L393.01 348.75L391.64 349.63L390.28 350.54L388.94 351.46L387.62 352.42L386.31 353.39L385.03 354.39L383.75 355.40L382.50 356.44L381.26 357.50L380.04 358.58L378.84 359.69L377.66 360.81L376.50 361.95L375.36 363.11L374.24 364.29L373.13 365.49L372.05 366.71L370.99 367.95L369.95 369.20L368.94 370.48L367.94 371.76L366.97 373.07L366.01 374.39L365.09 375.73L364.18 377.09L363.30 378.46L362.44 379.84L361.60 381.24L360.79 382.66L360.00 384.08L359.24 385.53L358.50 386.98L357.78 388.45L357.09 389.93L356.43 391.42L355.79 392.92L355.18 394.43L354.59 395.95L354.03 397.49L353.50 399.03L352.99 400.58L352.51 402.14L352.05 403.71L351.62 405.29L351.22 406.88L350.85 408.47L350.50 410.07L350.18 411.67L349.89 413.28L349.62 414.90L349.38 416.52L349.17 418.14L348.99 419.77L348.84 421.40L348.71 423.03L348.61 424.67L348.54 426.31L348.50 427.95L348.54 429.59L348.61 431.23L348.71 432.87L348.84 434.50L348.99 436.13L349.17 437.76L349.38 439.38L349.62 441.00L349.89 442.62L350.18 444.23L350.50 445.83L350.85 447.43L351.22 449.02L351.62 450.61L352.05 452.19L352.51 453.76L352.99 455.32L353.50 456.87L354.03 458.41L354.59 459.95L355.18 461.47L355.79 462.98L356.43 464.48L357.09 465.97L357.78 467.45L358.50 468.92L359.24 470.37L360.00 471.82L360.79 473.24L361.60 474.66L362.44 476.06L363.30 477.44L364.18 478.81L365.09 480.17L366.01 481.51L366.97 482.83L367.94 484.14L368.94 485.42L369.95 486.70L370.99 487.95L372.05 489.19L373.13 490.41L374.24 491.61L375.36 492.79L376.50 493.95L377.66 495.09L378.84 496.21L380.04 497.32L381.26 498.40L382.50 499.46L383.75 500.50L385.03 501.51L386.31 502.51L387.62 503.48L388.94 504.44L390.28 505.36L391.64 506.27L393.01 507.15L394.39 508.01L395.79 508.85L397.21 509.66L398.63 510.45L400.08 511.21L401.53 511.95L403.00 512.67L404.48 513.36L405.97 514.02L407.47 514.66L408.98 515.27L410.50 515.86L412.04 516.42L413.58 516.95L415.13 517.46L416.69 517.94L418.26 518.40L419.84 518.83L421.43 519.23L423.02 519.60L424.62 519.95L426.22 520.27L427.83 520.56L429.45 520.83L431.07 521.07L432.69 521.28L434.32 521.46L435.95 521.61L437.58 521.74L439.22 521.84L440.86 521.91L442.50 521.95L444.14 521.91L445.78 521.84L447.42 521.74L449.05 521.61L450.68 521.46L452.31 521.28L453.93 521.07L455.55 520.83L457.17 520.56L458.78 520.27L460.38 519.95L461.98 519.60L463.57 519.23L465.16 518.83L466.74 518.40L468.31 517.94L469.87 517.46L471.42 516.95L472.96 516.42L474.50 515.86L476.02 515.27L477.53 514.66L479.03 514.02L480.52 513.36L482.00 512.67L483.47 511.95L484.92 511.21L486.37 510.45L487.79 509.66L489.21 508.85L490.61 508.01L491.99 507.15L493.36 506.27L494.72 505.36L496.06 504.44L497.38 503.48L498.69 502.51L499.97 501.51L501.25 500.50L502.50 499.46L503.74 498.40L504.96 497.32L506.16 496.21L507.34 495.09L508.50 493.95L509.64 492.79L510.76 491.61L511.87 490.41L512.95 489.19L514.01 487.95L515.05 486.70L516.06 485.42L517.06 484.14L518.03 482.83L518.99 481.51L519.91 480.17L520.82 478.81L521.70 477.44L522.56 476.06L523.40 474.66L524.21 473.24L525.00 471.82L525.76 470.37L526.50 468.92L527.22 467.45L527.91 465.97L528.57 464.48L529.21 462.98L529.82 461.47L530.41 459.95L530.97 458.41L531.50 456.87L532.01 455.32L532.49 453.76L532.95 452.19L533.38 450.61L533.78 449.02L534.15 447.43L534.50 445.83L534.82 444.23L535.11 442.62L535.38 441.00L535.62 439.38L535.83 437.76L536.01 436.13L536.16 434.50L536.29 432.87L536.39 431.23L536.46 429.59L536.50 427.95Z" fill="#000" stroke="none" fill-rule="evenodd"/>
<path d="M726.80 374.85L726.81 376.58L726.79 378.30L726.75 380.03L726.67 381.76L726.56 383.48L726.42 385.20L726.24 386.93L726.04 388.64L725.81 390.36L725.55 392.07L725.25 393.77L724.93 395.47L724.58 397.17L724.19 398.86L723.78 400.54L723.33 402.22L722.86 403.88L722.36 405.54L721.82 407.19L721.26 408.83L720.67 410.46L720.05 412.08L719.40 413.69L718.72 415.28L718.01 416.87L717.28 418.44L716.51 420.00L715.72 421.55L714.90 423.08L714.06 424.59L713.18 426.09L712.28 427.58L711.36 429.05L710.41 430.50L709.43 431.94L708.43 433.36L707.40 434.76L706.34 436.14L705.27 437.50L704.16 438.84L703.04 440.17L701.89 441.47L700.71 442.75L699.52 444.01L698.30 445.25L697.06 446.47L695.80 447.66L694.52 448.84L693.22 449.99L691.89 451.11L690.55 452.22L689.19 453.29L687.81 454.35L686.41 455.38L684.99 456.38L683.55 457.36L682.10 458.31L680.63 459.23L679.14 460.13L677.64 461.01L676.13 461.85L674.60 462.67L673.05 463.46L671.49 464.23L669.92 464.96L668.33 465.67L666.74 466.35L665.13 467.00L663.51 467.62L661.88 468.21L660.24 468.77L658.59 469.31L656.93 469.81L655.27 470.28L653.59 470.73L651.91 471.14L650.22 471.53L648.52 471.88L646.82 472.20L645.12 472.50L643.41 472.76L641.69 472.99L639.98 473.19L638.25 473.37L636.53 473.51L634.81 473.62L633.08 473.70L631.35 473.74L629.63 473.76L627.90 473.75L626.17 473.76L624.45 473.74L622.72 473.70L620.99 473.62L619.27 473.51L617.55 473.37L615.82 473.19L614.11 472.99L612.39 472.76L610.68 472.50L608.98 472.20L607.28 471.88L605.58 471.53L603.89 471.14L602.21 470.73L600.53 470.28L598.87 469.81L597.21 469.31L595.56 468.77L593.92 468.21L592.29 467.62L590.67 467.00L589.06 466.35L587.47 465.67L585.88 464.96L584.31 464.23L582.75 463.46L581.20 462.67L579.67 461.85L578.16 461.01L576.66 460.13L575.17 459.23L573.70 458.31L572.25 457.36L570.81 456.38L569.39 455.38L567.99 454.35L566.61 453.29L565.25 452.22L563.91 451.11L562.58 449.99L561.28 448.84L560.00 447.66L558.74 446.47L557.50 445.25L556.28 444.01L555.09 442.75L553.91 441.47L552.76 440.17L551.64 438.84L550.53 437.50L549.46 436.14L548.40 434.76L547.37 433.36L546.37 431.94L545.39 430.50L544.44 429.05L543.52 427.58L542.62 426.09L541.74 424.59L540.90 423.08L540.08 421.55L539.29 420.00L538.52 418.44L537.79 416.87L537.08 415.28L536.40 413.69L535.75 412.08L535.13 410.46L534.54 408.83L533.98 407.19L533.44 405.54L532.94 403.88L532.47 402.22L532.02 400.54L531.61 398.86L531.22 397.17L530.87 395.47L530.55 393.77L530.25 392.07L529.99 390.36L529.76 388.64L529.56 386.93L529.38 385.20L529.24 383.48L529.13 381.76L529.05 380.03L529.01 378.30L528.99 376.58L529.00 374.85L528.99 373.12L529.01 371.40L529.05 369.67L529.13 367.94L529.24 366.22L529.38 364.50L529.56 362.77L529.76 361.06L529.99 359.34L530.25 357.63L530.55 355.93L530.87 354.23L531.22 352.53L531.61 350.84L532.02 349.16L532.47 347.48L532.94 345.82L533.44 344.16L533.98 342.51L534.54 340.87L535.13 339.24L535.75 337.62L536.40 336.01L537.08 334.42L537.79 332.83L538.52 331.26L539.29 329.70L540.08 328.15L540.90 326.62L541.74 325.11L542.62 323.61L543.52 322.12L544.44 320.65L545.39 319.20L546.37 317.76L547.37 316.34L548.40 314.94L549.46 313.56L550.53 312.20L551.64 310.86L552.76 309.53L553.91 308.23L555.09 306.95L556.28 305.69L557.50 304.45L558.74 303.23L560.00 302.04L561.28 300.86L562.58 299.71L563.91 298.59L565.25 297.48L566.61 296.41L567.99 295.35L569.39 294.32L570.81 293.32L572.25 292.34L573.70 291.39L575.17 290.47L576.66 289.57L578.16 288.69L579.67 287.85L581.20 287.03L582.75 286.24L584.31 285.47L585.88 284.74L587.47 284.03L589.06 283.35L590.67 282.70L592.29 282.08L593.92 281.49L595.56 280.93L597.21 280.39L598.87 279.89L600.53 279.42L602.21 278.97L603.89 278.56L605.58 278.17L607.28 277.82L608.98 277.50L610.68 277.20L612.39 276.94L614.11 276.71L615.82 276.51L617.55 276.33L619.27 276.19L620.99 276.08L622.72 276.00L624.45 275.96L626.17 275.94L627.90 275.95L629.63 275.94L631.35 275.96L633.08 276.00L634.81 276.08L636.53 276.19L638.25 276.33L639.98 276.51L641.69 276.71L643.41 276.94L645.12 277.20L646.82 277.50L648.52 277.82L650.22 278.17L651.91 278.56L653.59 278.97L655.27 279.42L656.93 279.89L658.59 280.39L660.24 280.93L661.88 281.49L663.51 282.08L665.13 282.70L666.74 283.35L668.33 284.03L669.92 284.74L671.49 285.47L673.05 286.24L674.60 287.03L676.13 287.85L677.64 288.69L679.14 289.57L680.63 290.47L682.10 291.39L683.55 292.34L684.99 293.32L686.41 294.32L687.81 295.35L689.19 296.41L690.55 297.48L691.89 298.59L693.22 299.71L694.52 300.86L695.80 302.04L697.06 303.23L698.30 304.45L699.52 305.69L700.71 306.95L701.89 308.23L703.04 309.53L704.16 310.86L705.27 312.20L706.34 313.56L707.40 314.94L708.43 316.34L709.43 317.76L710.41 319.20L711.36 320.65L712.28 322.12L713.18 323.61L714.06 325.11L714.90 326.62L715.72 328.15L716.51 329.70L717.28 331.26L718.01 332.83L718.72 334.42L719.40 336.01L720.05 337.62L720.67 339.24L721.26 340.87L721.82 342.51L722.36 344.16L722.86 345.82L723.33 347.48L723.78 349.16L724.19 350.84L724.58 352.53L724.93 354.23L725.25 355.93L725.55 357.63L725.81 359.34L726.04 361.06L726.24 362.77L726.42 364.50L726.56 366.22L726.67 367.94L726.75 369.67L726.79 371.40L726.81 373.12Z M721.96 373.21L721.89 371.57L721.79 369.93L721.66 368.29L721.51 366.66L721.33 365.03L721.12 363.40L720.88 361.78L720.61 360.17L720.32 358.55L720.00 356.95L719.65 355.35L719.28 353.75L718.88 352.17L718.45 350.59L717.99 349.02L717.51 347.45L717.00 345.90L716.46 344.36L715.90 342.82L715.31 341.29L714.70 339.78L714.06 338.28L713.40 336.78L712.71 335.30L711.99 333.84L711.25 332.38L710.49 330.94L709.70 329.51L708.89 328.09L708.05 326.69L707.19 325.31L706.30 323.93L705.40 322.58L704.47 321.24L703.51 319.91L702.54 318.60L701.54 317.31L700.52 316.04L699.48 314.78L698.42 313.55L697.34 312.33L696.24 311.13L695.11 309.94L693.97 308.78L692.81 307.64L691.62 306.51L690.42 305.41L689.20 304.33L687.97 303.27L686.71 302.23L685.44 301.21L684.15 300.21L682.84 299.24L681.51 298.28L680.17 297.35L678.82 296.45L677.44 295.56L676.06 294.70L674.66 293.86L673.24 293.05L671.81 292.26L670.37 291.50L668.91 290.76L667.45 290.04L665.97 289.35L664.47 288.69L662.97 288.05L661.46 287.44L659.93 286.85L658.39 286.29L656.85 285.75L655.30 285.24L653.73 284.76L652.16 284.30L650.58 283.87L649.00 283.47L647.40 283.10L645.80 282.75L644.20 282.43L642.58 282.14L640.97 281.87L639.35 281.63L637.72 281.42L636.09 281.24L634.46 281.09L632.82 280.96L631.18 280.86L629.54 280.79L627.90 280.75L626.26 280.79L624.62 280.86L622.98 280.96L621.34 281.09L619.71 281.24L618.08 281.42L616.45 281.63L614.83 281.87L613.22 282.14L611.60 282.43L610.00 282.75L608.40 283.10L606.80 283.47L605.22 283.87L603.64 284.30L602.07 284.76L600.50 285.24L598.95 285.75L597.41 286.29L595.87 286.85L594.34 287.44L592.83 288.05L591.33 288.69L589.83 289.35L588.35 290.04L586.89 290.76L585.43 291.50L583.99 292.26L582.56 293.05L581.14 293.86L579.74 294.70L578.36 295.56L576.98 296.45L575.63 297.35L574.29 298.28L572.96 299.24L571.65 300.21L570.36 301.21L569.09 302.23L567.83 303.27L566.60 304.33L565.38 305.41L564.18 306.51L562.99 307.64L561.83 308.78L560.69 309.94L559.56 311.13L558.46 312.33L557.38 313.55L556.32 314.78L555.28 316.04L554.26 317.31L553.26 318.60L552.29 319.91L551.33 321.24L550.40 322.58L549.50 323.93L548.61 325.31L547.75 326.69L546.91 328.09L546.10 329.51L545.31 330.94L544.55 332.38L543.81 333.84L543.09 335.30L542.40 336.78L541.74 338.28L541.10 339.78L540.49 341.29L539.90 342.82L539.34 344.36L538.80 345.90L538.29 347.45L537.81 349.02L537.35 350.59L536.92 352.17L536.52 353.75L536.15 355.35L535.80 356.95L535.48 358.55L535.19 360.17L534.92 361.78L534.68 363.40L534.47 365.03L534.29 366.66L534.14 368.29L534.01 369.93L533.91 371.57L533.84 373.21L533.80 374.85L533.84 376.49L533.91 378.13L534.01 379.77L534.14 381.41L534.29 383.04L534.47 384.67L534.68 386.30L534.92 387.92L535.19 389.53L535.48 391.15L535.80 392.75L536.15 394.35L536.52 395.95L536.92 397.53L537.35 399.11L537.81 400.68L538.29 402.25L538.80 403.80L539.34 405.34L539.90 406.88L540.49 408.41L541.10 409.92L541.74 411.42L542.40 412.92L543.09 414.40L543.81 415.86L544.55 417.32L545.31 418.76L546.10 420.19L546.91 421.61L547.75 423.01L548.61 424.39L549.50 425.77L550.40 427.12L551.33 428.46L552.29 429.79L553.26 431.10L554.26 432.39L555.28 433.66L556.32 434.92L557.38 436.15L558.46 437.37L559.56 438.57L560.69 439.76L561.83 440.92L562.99 442.06L564.18 443.19L565.38 444.29L566.60 445.37L567.83 446.43L569.09 447.47L570.36 448.49L571.65 449.49L572.96 450.46L574.29 451.42L575.63 452.35L576.98 453.25L578.36 454.14L579.74 455.00L581.14 455.84L582.56 456.65L583.99 457.44L585.43 458.20L586.89 458.94L588.35 459.66L589.83 460.35L591.33 461.01L592.83 461.65L594.34 462.26L595.87 462.85L597.41 463.41L598.95 463.95L600.50 464.46L602.07 464.94L603.64 465.40L605.22 465.83L606.80 466.23L608.40 466.60L610.00 466.95L611.60 467.27L613.22 467.56L614.83 467.83L616.45 468.07L618.08 468.28L619.71 468.46L621.34 468.61L622.98 468.74L624.62 468.84L626.26 468.91L627.90 468.95L629.54 468.91L631.18 468.84L632.82 468.74L634.46 468.61L636.09 468.46L637.72 468.28L639.35 468.07L640.97 467.83L642.58 467.56L644.20 467.27L645.80 466.95L647.40 466.60L649.00 466.23L650.58 465.83L652.16 465.40L653.73 464.94L655.30 464.46L656.85 463.95L658.39 463.41L659.93 462.85L661.46 462.26L662.97 461.65L664.47 461.01L665.97 460.35L667.45 459.66L668.91 458.94L670.37 458.20L671.81 457.44L673.24 456.65L674.66 455.84L676.06 455.00L677.44 454.14L678.82 453.25L680.17 452.35L681.51 451.42L682.84 450.46L684.15 449.49L685.44 448.49L686.71 447.47L687.97 446.43L689.20 445.37L690.42 444.29L691.62 443.19L692.81 442.06L693.97 440.92L695.11 439.76L696.24 438.57L697.34 437.37L698.42 436.15L699.48 434.92L700.52 433.66L701.54 432.39L702.54 431.10L703.51 429.79L704.47 428.46L705.40 427.12L706.30 425.77L707.19 424.39L708.05 423.01L708.89 421.61L709.70 420.19L710.49 418.76L711.25 417.32L711.99 415.86L712.71 414.40L713.40 412.92L714.06 411.42L714.70 409.92L715.31 408.41L715.90 406.88L716.46 405.34L717.00 403.80L717.51 402.25L717.99 400.68L718.45 399.11L718.88 397.53L719.28 395.95L719.65 394.35L720.00 392.75L720.32 391.15L720.61 389.53L720.88 387.92L721.12 386.30L721.33 384.67L721.51 383.04L721.66 381.41L721.79 379.77L721.89 378.13L721.96 376.49L722.00 374.85Z" fill="#000" stroke="none" fill-rule="evenodd"/>
<path d="M489.5 241.5L628.5 375.5M489.5 241.5L442.5 427.5L628.5 375.5" stroke-width="3" stroke-linecap="round"/>
<path d="M489.5 241.5L624.5 156.5H667M628.5 375.5L784 453.5H828M542.75 399L572.5 569.5H622" stroke-width="1"/>
<path d="M564.2 313.4A88.5 88.5 0 0 0 542.75 399" stroke-width="1"/>
</g>
<g fill="#000" stroke="none" clip-path="url(#dc)" shape-rendering="crispEdges">
<polygon points="572.9,189.2 586.9,183.3 584.3,178.7"/>
<polygon points="716.4,419.6 728.7,428.6 731.1,424.1"/>
<polygon points="563.5,313 551.3,323.3 556.5,328.3"/>
<polygon points="542.6,399 536.8,382.3 544.2,382.3"/>
</g>
<g fill="none" stroke="#000" stroke-width="1">
<path d="M66.5 598.5H76.5V608.5H66.5Z" stroke-width="1.3"/>
<path d="M71.5 598V553M77 603.5H121.5M55 613.5H81"/>
<path d="M67.5 553.5H76.5L71.5 541.5Z" stroke-width="1.2"/>
<path d="M71.5 543V553M70 549L71.5 544L73 549" stroke="#999"/>
<path d="M121.5 599.5V608.5L135 603.5Z" stroke-width="1.2"/>
<path d="M124 603.5H134M124 602L132 603.5L124 605" stroke="#999"/>
<path d="M68.5 520.5L73.5 526M78.5 520.5L73.5 526M73.5 527V533"/>
<path d="M145 598.5L155 609.5M155 598.5L145 609.5"/>
<path d="M56.5 608.5H61.5V618.5H56.5"/>
</g>
<rect x="55" y="589" width="2" height="19" fill="#000"/>
</svg>
<svg class="a" style="left:0;top:0" width="1024" height="768"><g transform="translate(17,44)"><path d="M3.5 2.5H11L13.5 5V15.5H3.5Z" fill="#fff" stroke="#000" stroke-width="1"/><rect x="11" y="3" width="1" height="1" fill="#000"/></g><g transform="translate(41,44)"><path d="M0.5 5.5H4.5L6 7H10V9H3L0.5 14.5Z" fill="#ffff00" stroke="#000" stroke-width="1"/><path d="M0.5 14.5L3.5 8.5H15.5L12.5 14.5Z" fill="#808000" stroke="#000" stroke-width="1"/><path d="M8 3Q10.5 0.5 13.5 3" fill="none" stroke="#000" stroke-width="1"/><path d="M12 3H15V5" fill="none" stroke="#000" stroke-width="1"/></g><g transform="translate(65,44)"><rect x="1" y="2" width="14" height="14" fill="#000"/><rect x="2" y="3" width="12" height="12" fill="#808000"/><rect x="4" y="3" width="8" height="6" fill="#c0c0c0"/><rect x="4" y="10" width="8" height="5" fill="#000"/><rect x="9" y="11" width="2" height="3" fill="#c0c0c0"/></g><g transform="translate(95,44)"><path d="M4.5 1.5H12.5L11 5.5H3Z" fill="#fff" stroke="#000" stroke-width="1"/><path d="M1.5 6.5Q1.5 5.5 3 5.5H13Q14.5 5.5 14.5 7V12.5Q14.5 14.5 12.5 14.5H3.5Q1.5 14.5 1.5 12.5Z" fill="#c0c0c0" stroke="#000" stroke-width="1"/><rect x="2" y="9" width="12" height="1" fill="#000"/><rect x="2" y="10" width="12" height="2" fill="#fff"/><rect x="6" y="10" width="3" height="1" fill="#ffff00"/><rect x="2" y="12" width="12" height="1" fill="#000"/><path d="M5 3.5H10" fill="none" stroke="#000" stroke-width="1"/><path d="M13 7L14.5 8.5M13 10L14.5 11.5" fill="none" stroke="#fff" stroke-width="1"/></g><g transform="translate(119,44)"><path d="M1.5 0.5H8.5L10.5 2.5V14.5H1.5Z" fill="#fff" stroke="#000" stroke-width="1"/><circle cx="9" cy="9" r="3.5" fill="#fff" stroke="#000" stroke-width="1"/><path d="M11.5 11.5L14.5 14.5" fill="none" stroke="#000080" stroke-width="2"/><path d="M8 7.5Q9 6.5 10 7" fill="none" stroke="#00ffff" stroke-width="1.2"/></g><g transform="translate(143,44)"><circle cx="7" cy="7" r="5.8" fill="#fff" stroke="#000" stroke-width="1.4"/><path d="M11.2 11.2L15 15" fill="none" stroke="#800000" stroke-width="2.2"/><text x="2.6" y="9.8" font-size="7.5" font-weight="bold" fill="#800000" font-family="Liberation Sans" letter-spacing="-0.6">ab</text><rect x="13" y="6" width="1" height="4" fill="#fff"/><path d="M15.5 6.5H13.5V9.5H15.5" fill="none" stroke="#800000" stroke-width="1.1"/></g><g transform="translate(173,44)"><path d="M5 1L8 9L11 1" fill="none" stroke="#000" stroke-width="1"/><circle cx="5" cy="13" r="2" fill="none" stroke="#000080" stroke-width="1.3"/><circle cx="11" cy="13" r="2" fill="none" stroke="#000080" stroke-width="1.3"/><path d="M6 11L8 9L10 11" fill="none" stroke="#000080" stroke-width="1"/></g><g transform="translate(197,44)"><path d="M0.5 1.5H6.5L8 3V10.5H0.5Z" fill="#fff" stroke="#000" stroke-width="1"/><rect x="2" y="4" width="4" height="1" fill="#000"/><rect x="2" y="6" width="3" height="1" fill="#000"/><path d="M6.5 5.5H13L15.5 8V15.5H6.5Z" fill="#fff" stroke="#000080" stroke-width="1"/><rect x="8" y="9" width="5" height="1" fill="#000080"/><rect x="8" y="11" width="5" height="1" fill="#000080"/><rect x="8" y="13" width="5" height="1" fill="#000080"/></g><g transform="translate(221,44)"><path d="M0.5 2.5H11.5V14.5H0.5Z" fill="#808000" stroke="#000" stroke-width="1"/><path d="M1.5 3.5H10.5V13.5H1.5Z" fill="none" stroke="#a0a040" stroke-width="1"/><path d="M3.5 3.5V1.5H8.5V3.5" fill="none" stroke="#ffff00" stroke-width="1.3"/><rect x="3" y="3" width="6" height="1.5" fill="#000"/><path d="M6.5 8.5H13L15.5 11V15.5H6.5Z" fill="#fff" stroke="#000080" stroke-width="1"/><rect x="8" y="11" width="5" height="1" fill="#000080"/><rect x="8" y="13" width="6" height="1" fill="#000080"/></g><g transform="translate(245,44)"><path d="M0.5 8.5L4.5 5.5H7.5L13.5 10L8 14.5H6Z" fill="#fff" stroke="#000" stroke-width="1.1"/><path d="M5 6.5L11.5 11.5L8.5 14" fill="none" stroke="#ffff00" stroke-width="2"/><path d="M9.5 6.5L13.5 2.5" fill="none" stroke="#000080" stroke-width="3"/><rect x="5" y="14.5" width="2" height="1.5" fill="#ffff00"/></g><g transform="translate(275,44)"><path d="M3 6Q7 2 11 4Q14 6 12 10" fill="none" stroke="#000080" stroke-width="2"/><path d="M1 4V9H6Z" fill="#000080"/></g><g transform="translate(299,44)"><path d="M13 6Q9 2 5 4Q2 6 4 10" fill="none" stroke="#000080" stroke-width="2"/><path d="M15 4V9H10Z" fill="#000080"/></g><g transform="translate(329,44)"><rect x="0" y="0" width="16" height="16" fill="#000080"/><path d="M1.5 1.5H8.5V8.5H1.5Z" fill="none" stroke="#fff" stroke-width="1"/><rect x="4" y="4" width="2" height="2" fill="#fff"/><path d="M8.5 5.5H16M5.5 8.5V16" fill="none" stroke="#fff" stroke-width="1"/><circle cx="12" cy="12" r="4" fill="#00c0ff"/><circle cx="12" cy="12" r="2.8" fill="#008000"/><path d="M10 10L13 9L14 13L11 14Z" fill="#808000"/><path d="M9 13Q12 16 15 12" fill="none" stroke="#00ffff" stroke-width="1"/></g><g transform="translate(353,44)"><circle cx="8" cy="8" r="7.5" fill="#0a6ce0"/><path d="M5 5.5Q6 4 8.5 4Q11 4 11 7V12M11 8H7Q5 8 5 10Q5 12 7 12H11" fill="none" stroke="#fff" stroke-width="2.2"/></g><g transform="translate(377,44)"><circle cx="6.5" cy="6.5" r="6" fill="#0000ff"/><path d="M2 3Q5 0.5 9 1.5L10 5L6.5 7.5L4 5Z" fill="#008000"/><path d="M7 8.5L11 7L12 10L8.5 12Z" fill="#008000"/><path d="M2 4Q3 2 5 1.5" fill="none" stroke="#fff" stroke-width="1"/><path d="M7 7Q11 5 13.5 8L12.5 14H8Z" fill="#fff" stroke="#000" stroke-width="1"/><rect x="9" y="14" width="3" height="2" fill="#008080"/><rect x="13" y="9" width="2" height="2" fill="#ff00ff"/><rect x="9" y="9" width="2" height="2" fill="#000"/></g><g transform="translate(401,44)"><circle cx="6.5" cy="6.5" r="6" fill="#0000ff"/><path d="M2 3Q5 0.5 9 1.5L10 5L6.5 7.5L4 5Z" fill="#008000"/><path d="M7 8.5L11 7L12 10L8.5 12Z" fill="#008000"/><path d="M2 4Q3 2 5 1.5" fill="none" stroke="#fff" stroke-width="1"/><path d="M8.5 5.5H13.5L12 9.5H7Z" fill="#fff" stroke="#000" stroke-width="1"/><path d="M5.5 9.5H15.5V14.5H5.5Z" fill="#c0c0c0" stroke="#000" stroke-width="1"/><rect x="6" y="11" width="9" height="1" fill="#000"/><rect x="9" y="12" width="3" height="1" fill="#ffff00"/></g><g transform="translate(425,44)"><circle cx="6.5" cy="6.5" r="6" fill="#0000ff"/><path d="M2 3Q5 0.5 9 1.5L10 5L6.5 7.5L4 5Z" fill="#008000"/><path d="M7 8.5L11 7L12 10L8.5 12Z" fill="#008000"/><path d="M2 4Q3 2 5 1.5" fill="none" stroke="#fff" stroke-width="1"/><rect x="6" y="6" width="10" height="10" fill="#000"/><rect x="7" y="7" width="8" height="8" fill="#808000"/><rect x="9" y="7" width="4" height="3" fill="#c0c0c0"/><rect x="9" y="11" width="4" height="4" fill="#000"/><rect x="11" y="12" width="1" height="2" fill="#c0c0c0"/></g><g transform="translate(449,44)"><circle cx="6.5" cy="6.5" r="6" fill="#0000ff"/><path d="M2 3Q5 0.5 9 1.5L10 5L6.5 7.5L4 5Z" fill="#008000"/><path d="M7 8.5L11 7L12 10L8.5 12Z" fill="#008000"/><path d="M2 4Q3 2 5 1.5" fill="none" stroke="#fff" stroke-width="1"/><path d="M6 9.5H14Q15.5 9.5 15.5 12Q15.5 14.5 14 14.5H6Q4.5 14.5 4.5 12Q4.5 9.5 6 9.5Z" fill="#c0c0c0" stroke="#000" stroke-width="1"/><rect x="6" y="11" width="8" height="2" fill="#fff"/><rect x="7" y="11.5" width="6" height="1" fill="#000"/></g><g transform="translate(479,44)"><rect x="0" y="6" width="3" height="1" fill="#000"/><rect x="1" y="5" width="1" height="3" fill="#000"/><path d="M4 6.5H9" fill="none" stroke="#000" stroke-width="1" stroke-dasharray="1 1"/><circle cx="11" cy="6.5" r="1.8" fill="#fff" stroke="#ff0000" stroke-width="1"/><path d="M16 12V16H12Z" fill="#000"/></g><g transform="translate(503,44)"><path d="M2.5 1V12.5H13" fill="none" stroke="#000" stroke-width="1"/><path d="M0.5 3L2.5 0.5L4.5 3" fill="none" stroke="#000" stroke-width="1"/><path d="M3 12L9 6" fill="none" stroke="#000" stroke-width="1"/><path d="M16 12V16H12Z" fill="#000"/></g><g transform="translate(533,44)"><path d="M3.5 1.5H15.5V13.5H3.5Z" fill="#fff" stroke="#000" stroke-width="1.3"/><path d="M0.5 5.5H8.5V11.5H0.5Z" fill="#fff" stroke="#000" stroke-width="1.2"/><rect x="1" y="6" width="7" height="2" fill="#000080"/><circle cx="9.5" cy="6.5" r="3.5" fill="none" stroke="#000" stroke-width="1.2"/><rect x="12" y="11" width="2" height="2" fill="#ff0000"/><path d="M16 14V18H12Z" fill="#000"/></g><g transform="translate(563,44)"><path d="M0.5 8Q8 3 15.5 8Q8 13 0.5 8Z" fill="#c0c0c0" stroke="#000" stroke-width="1"/><circle cx="8" cy="8" r="4" fill="#00a000" stroke="#000" stroke-width="1"/><circle cx="11" cy="11" r="2" fill="#ffff00"/><circle cx="7" cy="7" r="1.5" fill="#60ff60"/></g><g transform="translate(587,44)"><path d="M1 13L4 16H12L15 12L12 8L9 10V5Q8 3 7 5L5 9V4Q4 2 3 4V11Z" fill="#fff" stroke="#000" stroke-width="1.1"/><path d="M6 6L9 9M4 8L7 11" fill="none" stroke="#000" stroke-width="1"/><path d="M12 1L16 5M16 1L12 5M11 3L14 0" fill="none" stroke="#000" stroke-width="1.2"/></g><g transform="translate(611,44)"><circle cx="6" cy="6" r="4.5" fill="#fff" stroke="#000" stroke-width="1.6"/><path d="M9.5 9.5L14 14" fill="none" stroke="#008080" stroke-width="2.2"/><path d="M11 4H16M13.5 1V6M11 7.5H16" fill="none" stroke="#000" stroke-width="1"/></g><g transform="translate(635,44)"><circle cx="7" cy="7" r="6" fill="#fff" stroke="#000" stroke-width="1.6"/><path d="M3.5 5.5H11.5V9.5H3.5Z" fill="none" stroke="#000" stroke-width="1"/><rect x="3" y="8" width="2" height="2" fill="#ff0000"/><rect x="10" y="4" width="2" height="2" fill="#ff0000"/><path d="M16 12V16H12Z" fill="#000"/></g><g transform="translate(659,44)"><circle cx="6.5" cy="7" r="6" fill="#fff" stroke="#000" stroke-width="1.6"/><path d="M5 3L10 8L6 12L4 10L7 7Z" fill="#000"/><circle cx="11" cy="7" r="4" fill="none" stroke="#000" stroke-width="1"/><path d="M11 11L14 14" fill="none" stroke="#000" stroke-width="2"/></g><g transform="translate(689,44)"><rect x="1" y="1" width="11" height="15" fill="#fff"/><path d="M0.5 0.5H11.5V15.5H0.5Z" fill="none" stroke="#000" stroke-width="1"/><rect x="1" y="1" width="11" height="2" fill="#000080"/><rect x="3" y="5" width="2" height="2" fill="#008080"/><rect x="7" y="5" width="2" height="2" fill="#0000ff"/><rect x="3" y="9" width="2" height="2" fill="#008080"/><rect x="7" y="9" width="2" height="2" fill="#008080"/><rect x="3" y="12" width="2" height="2" fill="#ff0000"/><rect x="7" y="12" width="2" height="2" fill="#008080"/><path d="M12 5Q15 5 15 9" fill="none" stroke="#0000ff" stroke-width="1"/><rect x="14" y="12" width="2" height="2" fill="#0000ff"/></g><g transform="translate(713,44)"><rect x="1" y="1" width="3" height="3" fill="#0000ff"/><rect x="4" y="1" width="3" height="3" fill="#ff0000"/><rect x="7" y="1" width="3" height="3" fill="#ffff00"/><rect x="10" y="1" width="2" height="3" fill="#008000"/><text x="0.5" y="12" font-size="8" fill="#000" font-family="Liberation Sans">A</text><rect x="1" y="13" width="2" height="2" fill="#000"/><rect x="4" y="13" width="3" height="2" fill="#000"/><rect x="8" y="13" width="3" height="2" fill="#000"/><path d="M7 8Q11 3 16 3V6L11 8Z" fill="#fff" stroke="#000" stroke-width="1"/></g><g transform="translate(743,44)"><path d="M4.5 5Q4.5 1.5 8 1.5Q11.5 1.5 11.5 4.5Q11.5 6.5 8.5 8V10" fill="none" stroke="#800000" stroke-width="2.4"/><rect x="7" y="12" width="3" height="3" fill="#800000"/></g><g transform="translate(767,44)"><rect x="2" y="2" width="14" height="14" fill="#c8c8c8"/><path d="M0.5 5Q0.5 1.5 4 1.5Q7.5 1.5 7.5 4.5Q7.5 6.5 4.5 8V10.5" fill="none" stroke="#ffff00" stroke-width="2.2"/><rect x="3" y="12" width="3" height="3" fill="#ffff00"/><path d="M5 10.5H16M10.5 5V16" fill="none" stroke="#ff0000" stroke-width="1.2"/><path d="M9 9H12V12H9Z" fill="#fff" stroke="#ff0000" stroke-width="1.2"/></g><g transform="translate(17,74)"><path d="M0.5 6.5H10.5L15.5 11.5H5.5Z" fill="#ffff00" stroke="#000" stroke-width="1"/><path d="M0.5 3.5H10.5L15.5 8.5H5.5Z" fill="#c0c0c0" stroke="#000" stroke-width="1"/><path d="M0.5 0.5H10.5L15.5 5.5H5.5Z" fill="#c0c0c0" stroke="#000" stroke-width="1"/><path d="M0 15L3 11L4 14Z" fill="#000"/></g><g transform="translate(41,74)"><path d="M0.5 6.5H10.5L15.5 11.5H5.5Z" fill="#fff" stroke="#000" stroke-width="1"/><path d="M0.5 3.5H10.5L15.5 8.5H5.5Z" fill="#fff" stroke="#000" stroke-width="1"/><path d="M0.5 0.5H10.5L15.5 5.5H5.5Z" fill="#fff" stroke="#000" stroke-width="1"/></g><g transform="translate(67,75)"><circle cx="5" cy="5" r="4" fill="#ffff80" stroke="#ffff00" stroke-width="1.5"/><path d="M3.5 8.5V11H6.5V8.5" fill="none" stroke="#000" stroke-width="1"/><rect x="4" y="11" width="2" height="2" fill="#000"/></g><g transform="translate(82,76)"><rect x="0" y="1" width="11" height="11" fill="#ffff00"/><circle cx="5.5" cy="6.5" r="4" fill="#ffffc0" stroke="#000" stroke-width="1"/></g><g transform="translate(98,76)"><circle cx="5" cy="5" r="4.5" fill="#a8a8a8" stroke="#808080" stroke-width="1"/><path d="M5.5 5.5H11.5V11.5H5.5Z" fill="#fff" stroke="#808080" stroke-width="1"/></g><g transform="translate(115,75)"><rect x="0" y="6" width="9" height="6" fill="#000"/><rect x="0" y="7" width="9" height="1" fill="#808000"/><rect x="0" y="9" width="9" height="1" fill="#808000"/><path d="M9 6V2Q11 0 13 2V5" fill="none" stroke="#808000" stroke-width="1.8"/></g><g transform="translate(246,74)"><path d="M0.5 7.5H10.5L15.5 12.5H5.5Z" fill="#fff" stroke="#808080" stroke-width="1"/><path d="M0.5 4.5H10.5L15.5 9.5H5.5Z" fill="#fff" stroke="#808080" stroke-width="1"/><path d="M0.5 1.5H10.5L15.5 6.5H5.5Z" fill="#fff" stroke="#808080" stroke-width="1"/><path d="M8 10L11 2Q15 0 15 4L12 6" fill="none" stroke="#000" stroke-width="1.8"/><path d="M7 11L9 6L11 8Z" fill="#000"/></g><g transform="translate(5,110)"><path d="M3 12L13 2" fill="none" stroke="#000" stroke-width="1"/><rect x="2" y="11" width="2" height="2" fill="#800000"/><rect x="12" y="1" width="2" height="2" fill="#800000"/></g><g transform="translate(5,133)"><path d="M2 14L14 2" fill="none" stroke="#000" stroke-width="1.2"/><path d="M1 15L2 10.5M1 15L5.5 14M15 1L10.5 2M15 1L14 5.5" fill="none" stroke="#000" stroke-width="1.5"/><path d="M6 8.4L7.6 10L6 11.6L4.4 10Z" fill="#800000"/><path d="M9 5.4L10.6 7L9 8.6L7.4 7Z" fill="#800000"/></g><g transform="translate(5,156)"><path d="M1.5 12L11 2.5M4.5 15L14 5.5" fill="none" stroke="#000" stroke-width="1.2"/><path d="M3.5 11.4L5.1 13L3.5 14.6L1.9 13Z" fill="#800000"/><path d="M12 2.4L13.6 4L12 5.6L10.4 4Z" fill="#800000"/><rect x="6.5" y="8.5" width="1" height="1" fill="#000"/><rect x="8.5" y="6.5" width="1" height="1" fill="#000"/></g><g transform="translate(5,179)"><path d="M2.5 12.5H11.5Q14.5 12 14.5 8.5Q14.5 5 10 5" fill="none" stroke="#000" stroke-width="1"/><path d="M2.5 10.9L4.1 12.5L2.5 14.1L0.8999999999999999 12.5Z" fill="#800000"/><path d="M11.5 10.9L13.1 12.5L11.5 14.1L9.9 12.5Z" fill="#800000"/><path d="M9.8 3.4L11.4 5L9.8 6.6L8.200000000000001 5Z" fill="#800000"/></g><g transform="translate(5,202)"><path d="M8 1.5L14.5 6L12 13.5H4L1.5 6Z" fill="#fff" stroke="#000" stroke-width="1"/></g><g transform="translate(5,225)"><path d="M1.5 3.5H14.5V12.5H1.5Z" fill="#fff" stroke="#000" stroke-width="1"/><rect x="1" y="12" width="2" height="2" fill="#800000"/><rect x="13" y="2" width="2" height="2" fill="#800000"/></g><g transform="translate(5,248)"><path d="M2 14Q3 4 14 2.5" fill="none" stroke="#000" stroke-width="1"/><circle cx="2" cy="14" r="1.8" fill="#800000"/><path d="M5.5 4.4L7.1 6L5.5 7.6L3.9 6Z" fill="#800000"/><path d="M13.5 0.8999999999999999L15.1 2.5L13.5 4.1L11.9 2.5Z" fill="#800000"/></g><g transform="translate(5,271)"><circle cx="7.5" cy="8" r="6.3" fill="#fff" stroke="#000" stroke-width="1.2"/><path d="M7.5 8L10.5 5" fill="none" stroke="#800000" stroke-width="1.3"/><path d="M7.5 6.4L9.1 8L7.5 9.6L5.9 8Z" fill="#800000"/></g><g transform="translate(5,294)"><path d="M1 11Q4 4 7 8Q10 12 15 5" fill="none" stroke="#000" stroke-width="1"/></g><g transform="translate(5,317)"><path d="M1.5 8Q1.5 4 8 4Q14.5 4 14.5 8Q14.5 12 8 12Q1.5 12 1.5 8Z" fill="#fff" stroke="#000" stroke-width="1"/><path d="M1.5 6.4L3.1 8L1.5 9.6L-0.10000000000000009 8Z" fill="#800000"/><path d="M8 2.4L9.6 4L8 5.6L6.4 4Z" fill="#800000"/><path d="M14.5 6.4L16.1 8L14.5 9.6L12.9 8Z" fill="#800000"/></g><g transform="translate(5,340)"><path d="M2 6Q5 3.5 9 4Q14.5 4.5 14.5 8Q14.5 12 8 12" fill="#fff" stroke="#000" stroke-width="1"/><path d="M2 6Q3 11 8 12" fill="#fff"/><path d="M2 4.4L3.6 6L2 7.6L0.3999999999999999 6Z" fill="#800000"/><path d="M8 10.4L9.6 12L8 13.6L6.4 12Z" fill="#800000"/></g><g transform="translate(5,363)"><path d="M6.5 1.5H12L14.5 4V14.5H6.5Z" fill="#fff" stroke="#000" stroke-width="1"/><path d="M1.5 5.5H9.5V12.5H1.5Z" fill="#ffff00" stroke="#000" stroke-width="1"/><circle cx="9.5" cy="12" r="3.5" fill="#ffff00" stroke="#000" stroke-width="1"/><rect x="0" y="12" width="2" height="2" fill="#000"/></g><g transform="translate(5,386)"><path d="M2.5 1.5H10.5V8.5H2.5Z" fill="#ffff00" stroke="#000" stroke-width="1"/><circle cx="10.5" cy="9.5" r="3.8" fill="#ffff00" stroke="#000" stroke-width="1"/><path d="M2.5 8.5L0.5 10.5" fill="none" stroke="#000" stroke-width="1.5"/></g><g transform="translate(5,409)"><path d="M8 6.4L9.6 8L8 9.6L6.4 8Z" fill="#800000"/></g><g transform="translate(5,432)"><rect x="3" y="4" width="10" height="10" fill="#a00000"/><path d="M3 8L7 4M3 12L11 4M5 14L13 6M9 14L13 10" fill="none" stroke="#fff" stroke-width="1.5"/><path d="M0.5 4.5H15.5M0.5 13.5H15.5M3.5 1V16M12.5 1V16" fill="none" stroke="#000" stroke-width="1.2"/><path d="M11 14L15 9" fill="none" stroke="#000" stroke-width="1"/></g><g transform="translate(5,455)"><path d="M2.5 2.5H10L13.5 6.5V13.5H2.5Z" fill="#fff" stroke="#000" stroke-width="1.3"/><circle cx="7.5" cy="8.5" r="2" fill="none" stroke="#000" stroke-width="1.3"/></g><g transform="translate(5,478)"><text x="-0.5" y="13.5" font-size="19" font-family="Liberation Serif" fill="#000" transform="scale(1.05,1)">A</text></g><g transform="translate(32,110)"><path d="M7 11L13 2L16 4L10 13Z" fill="#ffff00" stroke="#000" stroke-width="1"/><path d="M4 9L9 4L12 7L7 12Z" fill="#c000c0" stroke="#000" stroke-width="1"/><path d="M6 10L8 12" fill="none" stroke="#fff" stroke-width="1.5"/><path d="M1 14H5M11 14H15" fill="none" stroke="#000" stroke-width="1.5"/><path d="M5 14H11" fill="none" stroke="#808080" stroke-width="1"/></g><g transform="translate(32,133)"><circle cx="4.5" cy="5" r="3.5" fill="#fff" stroke="#000" stroke-width="1.2"/><circle cx="10" cy="11.5" r="3.5" fill="#fff" stroke="#000" stroke-width="1.2"/><path d="M9 2L12 5M12 3V5H10" fill="none" stroke="#000" stroke-width="1.2"/></g><g transform="translate(32,156)"><path d="M7 2V16" fill="none" stroke="#ff0000" stroke-width="1"/><path d="M5.5 4V14H1Z" fill="#fff" stroke="#000" stroke-width="1"/><path d="M9.5 4V14H14Z" fill="#fff" stroke="#000" stroke-width="1"/></g><g transform="translate(32,179)"><path d="M1.5 12.5Q0 12.5 0.5 10Q1 8 3.5 8.5Q3.5 5 6 4Q8.5 3 10 4.5Q12 3.5 13 6Q13.5 8 13 8.5Q16 8.5 15.5 11Q15 13 13.5 12.5Z" fill="#fff" stroke="#000" stroke-width="1.2"/><path d="M4 11H12M8 6V11M6 8.5H10" fill="none" stroke="#800000" stroke-width="1.3"/></g><g transform="translate(32,202)"><path d="M1.5 2.5h5v5h-5z" fill="#fff" stroke="#000" stroke-width="1.3"/><path d="M1.5 10.5h5v5h-5z" fill="#fff" stroke="#000" stroke-width="1.3"/><path d="M9.5 2.5h5v5h-5z" fill="#fff" stroke="#000" stroke-width="1.3"/><path d="M9.5 10.5h5v5h-5z" fill="#fff" stroke="#000" stroke-width="1.3"/></g><g transform="translate(32,225)"><path d="M8 1V15M1 8H15" fill="none" stroke="#000" stroke-width="1.5"/><path d="M5 4L8 1L11 4M5 12L8 15L11 12M4 5L1 8L4 11M12 5L15 8L12 11" fill="none" stroke="#000" stroke-width="1.5"/></g><g transform="translate(32,248)"><path d="M5 4.5A5.5 5.5 0 1 0 10.5 4" fill="none" stroke="#000" stroke-width="2.2"/><path d="M2 2.5L8 2L5 7Z" fill="#000"/></g><g transform="translate(32,271)"><path d="M3.5 2.5H13.5V14.5H3.5" fill="none" stroke="#800000" stroke-width="1.2"/><path d="M3.5 2.5V14.5" fill="none" stroke="#800000" stroke-width="1.2"/><path d="M3.5 8.5H8.5V14.5" fill="none" stroke="#000" stroke-width="1" stroke-dasharray="1 1"/><path d="M2.5 7.5V15.5H9.5" fill="none" stroke="#000" stroke-width="1" stroke-dasharray="1 1"/></g><g transform="translate(32,294)"><path d="M2.5 3.5H10.5L14.5 14.5H2.5Z" fill="#fff" stroke="#000" stroke-width="1.2"/><path d="M8.5 3.5V14.5" fill="none" stroke="#000" stroke-width="1" stroke-dasharray="1 1"/><path d="M10.5 3.5L14.5 14.5H8.5" fill="none" stroke="#800000" stroke-width="1.2"/></g><g transform="translate(32,317)"><path d="M2 14L9 7" fill="none" stroke="#000" stroke-width="1.2"/><path d="M2.5 11.9L4.1 13.5L2.5 15.1L0.8999999999999999 13.5Z" fill="#800000"/><path d="M9 7L15 1" fill="none" stroke="#800000" stroke-width="1.2" stroke-dasharray="2 1"/><path d="M14.5 -0.10000000000000009L16.1 1.5L14.5 3.1L12.9 1.5Z" fill="#800000"/></g><g transform="translate(32,340)"><path d="M1 8.5H8" fill="none" stroke="#000" stroke-width="2"/><path d="M9 8.5H15" fill="none" stroke="#800000" stroke-width="2" stroke-dasharray="2 1"/><path d="M4 15L11 1" fill="none" stroke="#000" stroke-width="1.3"/></g><g transform="translate(32,363)"><path d="M0 8.5H6" fill="none" stroke="#000" stroke-width="2"/><path d="M7 8.5H11" fill="none" stroke="#800000" stroke-width="2" stroke-dasharray="2 1"/><path d="M9 15L15 1" fill="none" stroke="#000" stroke-width="1.3"/></g><g transform="translate(32,386)"><path d="M2.5 4.5H14.5V11.5H2.5Z" fill="#fff" stroke="#000" stroke-width="1.3"/><path d="M8.5 2.5H11.5V5.5H8.5Z" fill="#fff" stroke="#800000" stroke-width="1.3"/></g><g transform="translate(32,409)"><path d="M1.5 5.5H14.5V12.5H1.5Z" fill="#fff" stroke="#000" stroke-width="1.3"/><path d="M4 3.9L5.6 5.5L4 7.1L2.4 5.5Z" fill="#800000"/><path d="M11 3.9L12.6 5.5L11 7.1L9.4 5.5Z" fill="#800000"/></g><g transform="translate(32,432)"><path d="M2.5 16V10L8 3.5H15" fill="none" stroke="#000" stroke-width="1.3"/><path d="M1.5 2V7M2 1.5H6" fill="none" stroke="#000" stroke-width="1" stroke-dasharray="1 1"/></g><g transform="translate(32,455)"><path d="M2.5 16V10Q2.5 3.5 9 3.5H15" fill="none" stroke="#000" stroke-width="1.3"/><path d="M1.5 2V7M2 1.5H6M4 4L6 6" fill="none" stroke="#000" stroke-width="1" stroke-dasharray="1 1"/></g><g transform="translate(32,478)"><path d="M0.5 12L8 5.5L11 8.5L3.5 15Z" fill="#ff0000" stroke="#000" stroke-width="1.3"/><path d="M2 12.5L8 7.5" fill="none" stroke="#fff" stroke-width="1.2"/><circle cx="8.8" cy="6.8" r="1.5" fill="#ff0000" stroke="#000" stroke-width="1"/><path d="M10 4.5L11.5 3" fill="none" stroke="#000" stroke-width="1.2"/><path d="M8 1L9 2.5M11 0V2M13.5 1L12.5 2.5M13 4H15.5M12.5 6L14 7.5" fill="none" stroke="#800000" stroke-width="1.1"/></g><g transform="translate(29,644)"><rect x="0" y="8" width="3" height="1" fill="#000"/><rect x="1" y="7" width="1" height="3" fill="#000"/><path d="M4 8.5H11" fill="none" stroke="#000" stroke-width="1" stroke-dasharray="1 1"/><circle cx="13" cy="8.5" r="1.8" fill="#fff" stroke="#900000" stroke-width="1"/></g><g transform="translate(53,644)"><path d="M2.5 5V13M3 4.5H12" fill="none" stroke="#000" stroke-width="1" stroke-dasharray="1 1"/><rect x="1" y="13" width="3" height="1" fill="#000"/><rect x="2" y="12" width="1" height="3" fill="#000"/><circle cx="14" cy="4.5" r="1.8" fill="#fff" stroke="#900000" stroke-width="1"/></g><g transform="translate(84,644)"><path d="M3 13L13 3" fill="none" stroke="#000" stroke-width="1"/><circle cx="3" cy="13" r="1.8" fill="#fff" stroke="#900000" stroke-width="1"/><circle cx="12.5" cy="3.5" r="1.8" fill="#fff" stroke="#900000" stroke-width="1"/></g><g transform="translate(107,644)"><path d="M1 14L14 2" fill="none" stroke="#000" stroke-width="1"/><circle cx="7.5" cy="8" r="1.8" fill="#fff" stroke="#900000" stroke-width="1"/></g><g transform="translate(131,644)"><path d="M1 1L14 14M14 1L1 14" fill="none" stroke="#000" stroke-width="1"/><rect x="5.7" y="5.7" width="3.6" height="3.6" fill="#fff" stroke="#900000" stroke-width="1"/></g><g transform="translate(155,644)"><path d="M1 14L14 1" fill="none" stroke="#000" stroke-width="1"/><path d="M1 1L14 14" fill="none" stroke="#000" stroke-width="1" stroke-dasharray="2 1"/><rect x="5.7" y="5.7" width="3.6" height="3.6" fill="#fff" stroke="#900000" stroke-width="1"/></g><g transform="translate(179,644)"><path d="M0 8H6M8 8H10M12 8H14" fill="none" stroke="#000" stroke-width="1.2"/></g><g transform="translate(208,644)"><circle cx="8" cy="8" r="6.5" fill="none" stroke="#000" stroke-width="1.1"/><circle cx="8" cy="8" r="1.8" fill="#fff" stroke="#900000" stroke-width="1"/></g><g transform="translate(232,644)"><circle cx="8" cy="8" r="6" fill="none" stroke="#000" stroke-width="1.1"/><circle cx="8" cy="2" r="1.8" fill="#fff" stroke="#900000" stroke-width="1"/><circle cx="14" cy="8" r="1.8" fill="#fff" stroke="#900000" stroke-width="1"/><circle cx="8" cy="14" r="1.8" fill="#fff" stroke="#900000" stroke-width="1"/><circle cx="2" cy="8" r="1.8" fill="#fff" stroke="#900000" stroke-width="1"/></g><g transform="translate(257,644)"><circle cx="8.5" cy="9" r="5.5" fill="none" stroke="#000" stroke-width="1.1"/><path d="M1 6L8 0" fill="none" stroke="#000" stroke-width="1"/><circle cx="4" cy="4.5" r="1.8" fill="#fff" stroke="#900000" stroke-width="1"/></g><g transform="translate(287,644)"><path d="M1.5 13.5H14.5M8 2V13" fill="none" stroke="#000" stroke-width="1"/><circle cx="8" cy="13.5" r="1.8" fill="#fff" stroke="#900000" stroke-width="1"/></g><g transform="translate(311,644)"><path d="M1 14L11 3M5 14L15 3" fill="none" stroke="#000" stroke-width="1"/></g><g transform="translate(335,644)"><rect x="1" y="1" width="9" height="8" fill="#ffff00"/><path d="M1.5 1.5H9.5V8.5H1.5Z" fill="none" stroke="#000" stroke-width="1"/><circle cx="10" cy="10" r="3.5" fill="#ffff00" stroke="#000" stroke-width="1"/><circle cx="2" cy="9" r="1.6" fill="#fff" stroke="#a00000" stroke-width="1.2"/></g><g transform="translate(359,644)"><circle cx="8" cy="8" r="1.8" fill="#fff" stroke="#900000" stroke-width="1"/></g><g transform="translate(389,644)"><path d="M1 15L13 2" fill="none" stroke="#000" stroke-width="1"/><circle cx="10" cy="5" r="1.8" fill="#fff" stroke="#900000" stroke-width="1"/><circle cx="12.5" cy="8" r="1.5" fill="none" stroke="#808080" stroke-width="1"/></g><g transform="translate(413,644)"><path d="M2 2L10 11M10 2L2 11" fill="none" stroke="#800000" stroke-width="2.5"/><circle cx="13" cy="13" r="1.8" fill="#fff" stroke="#000" stroke-width="1.2"/></g><g transform="translate(443,644)"><path d="M2 10V5Q2 1 7 1Q12 1 12 5V10H9V5Q9 4 7 4Q5 4 5 5V10Z" fill="#a00000"/><rect x="2" y="10" width="3" height="2" fill="#fff"/><rect x="9" y="10" width="3" height="2" fill="#fff"/><circle cx="13.5" cy="12.5" r="1.8" fill="#fff" stroke="#900000" stroke-width="1"/></g><g transform="translate(485,644)"><path d="M1.5 3V13M14.5 3V13" fill="none" stroke="#000" stroke-width="1.5"/><path d="M2 8H14" fill="none" stroke="#000" stroke-width="1"/><path d="M2 8L5 6V10Z" fill="#000"/><path d="M14 8L11 6V10Z" fill="#000"/></g><g transform="translate(509,644)"><path d="M1 4L5 0M11 16L15 12M3 2L13 14" fill="none" stroke="#000" stroke-width="1"/><path d="M3 2L4 6M3 2L7 3M13 14L9 13M13 14L12 10" fill="none" stroke="#000" stroke-width="1.5"/></g><g transform="translate(533,644)"><text x="0" y="10" font-size="6" fill="#000" font-family="Liberation Sans">Y</text><text x="0" y="16" font-size="6" fill="#000" font-family="Liberation Sans">0</text><text x="7" y="5" font-size="6" fill="#000" font-family="Liberation Sans">0</text><text x="12" y="5" font-size="6" fill="#000" font-family="Liberation Sans">X</text><path d="M4 13.5H15M9 6V15M5 9H10L14 6" fill="none" stroke="#000" stroke-width="1" stroke-dasharray="1 1"/></g><g transform="translate(563,644)"><circle cx="8" cy="8" r="7" fill="none" stroke="#808080" stroke-width="1"/><path d="M4.5 4.5L8 8" fill="none" stroke="#000" stroke-width="1"/><path d="M4 4L7 5M4 4L5 7" fill="none" stroke="#000" stroke-width="1.5"/></g><g transform="translate(588,644)"><circle cx="8" cy="8" r="7" fill="none" stroke="#808080" stroke-width="1"/><path d="M4 4L12 12" fill="none" stroke="#000" stroke-width="1.2"/><path d="M4 4L7 5M4 4L5 7M12 12L9 11M12 12L11 9" fill="none" stroke="#000" stroke-width="1.5"/></g><g transform="translate(611,644)"><path d="M1 14.5H15M2 14L10 3" fill="none" stroke="#000" stroke-width="1.1"/><path d="M8 5Q13 7 13 13" fill="none" stroke="#000" stroke-width="1"/><path d="M8 4L11 5L9 7Z" fill="#000"/><path d="M13 14L11 11H15Z" fill="#000"/></g><g transform="translate(641,644)"><path d="M2 4H13" fill="none" stroke="#000" stroke-width="1"/><path d="M2 4L5 2V6Z" fill="#000"/><path d="M13 4L10 2V6Z" fill="#000"/><path d="M1.5 1V8M13.5 1V8" fill="none" stroke="#000" stroke-width="1.2"/><path d="M12 6L9 11H12L9 16" fill="none" stroke="#ffff00" stroke-width="1.8"/></g><g transform="translate(665,644)"><path d="M1.5 1V16M14.5 1V7M8.5 9V16" fill="none" stroke="#000" stroke-width="1.2"/><path d="M2 3.5H14" fill="none" stroke="#000" stroke-width="1"/><path d="M2 3.5L5 1.5V5.5Z" fill="#000"/><path d="M14 3.5L11 1.5V5.5Z" fill="#000"/><path d="M2 12.5H8" fill="none" stroke="#000" stroke-width="1"/><path d="M2 12.5L5 10.5V14.5Z" fill="#000"/><path d="M8 12.5L5 10.5V14.5Z" fill="#000"/></g><g transform="translate(689,644)"><path d="M1.5 3V15M8 3V15M14.5 3V15" fill="none" stroke="#000" stroke-width="1.2"/><path d="M2 9H8" fill="none" stroke="#000" stroke-width="1"/><path d="M2 9L5 7V11Z" fill="#000"/><path d="M8 9L5 7V11Z" fill="#000"/><path d="M8 9H14" fill="none" stroke="#000" stroke-width="1"/><path d="M8 9L11 7V11Z" fill="#000"/><path d="M14 9L11 7V11Z" fill="#000"/><rect x="4" y="8" width="1" height="2" fill="#800000"/><rect x="11" y="8" width="1" height="2" fill="#800000"/></g><g transform="translate(719,644)"><path d="M1 13L6 7H9" fill="none" stroke="#000" stroke-width="1"/><path d="M1 13L2 9M1 13L5 12" fill="none" stroke="#000" stroke-width="1.3"/><text x="9" y="6" font-size="7" fill="#000" font-family="Liberation Sans">A</text><path d="M13 7L9 12H12L8 16" fill="none" stroke="#ffff00" stroke-width="1.8"/></g><g transform="translate(743,644)"><rect x="0" y="3" width="16" height="10" fill="#fff"/><path d="M0.5 3.5H15.5V12.5H0.5Z" fill="none" stroke="#000" stroke-width="1"/><rect x="8" y="3" width="1" height="10" fill="#000"/><path d="M4 5L6.5 8L4 11L1.5 8Z" fill="none" stroke="#000" stroke-width="1"/><rect x="10" y="10" width="1" height="2" fill="#000"/><rect x="13" y="5" width="1.5" height="6" fill="#000"/></g><g transform="translate(767,644)"><circle cx="8" cy="8" r="7" fill="none" stroke="#808080" stroke-width="1"/><path d="M8 5V11M5 8H11" fill="none" stroke="#000" stroke-width="1"/></g><g transform="translate(797,644)"><text x="4.5" y="8" font-size="9" fill="#800000" font-family="Liberation Sans">A</text><path d="M2 12H14" fill="none" stroke="#000" stroke-width="1"/><path d="M2 12L5 10V14Z" fill="#000"/><path d="M14 12L11 10V14Z" fill="#000"/><path d="M1.5 9V15M14.5 9V15" fill="none" stroke="#000" stroke-width="1.5"/></g><g transform="translate(821,644)"><path d="M2 6Q5 9 8 7" fill="none" stroke="#000" stroke-width="1"/><path d="M8 7L12 1L15 3L11 8Z" fill="#ffff00" stroke="#000" stroke-width="1"/><path d="M2 12H14" fill="none" stroke="#000" stroke-width="1"/><path d="M2 12L5 10V14Z" fill="#000"/><path d="M14 12L11 10V14Z" fill="#000"/><path d="M1.5 9V15M14.5 9V15" fill="none" stroke="#000" stroke-width="1.5"/></g><g transform="translate(845,644)"><path d="M3.5 2V15M12.5 2V15" fill="none" stroke="#800000" stroke-width="1.5"/><path d="M4 5H12" fill="none" stroke="#000" stroke-width="1"/><path d="M4 5L7 3V7Z" fill="#000"/><path d="M12 5L9 3V7Z" fill="#000"/><path d="M1.5 5V15M10 5V15" fill="none" stroke="#000" stroke-width="1.2"/><path d="M2 10H10" fill="none" stroke="#000" stroke-width="1"/><path d="M2 10L5 8V12Z" fill="#000"/><path d="M10 10L7 8V12Z" fill="#000"/></g><g transform="translate(1013,643)"><path d="M3 1V8M3 5H16M6 2L5 6" fill="none" stroke="#000" stroke-width="1.3"/><circle cx="5" cy="9" r="3" fill="#fff" stroke="#000" stroke-width="1.5"/><path d="M7 12L10 15" fill="none" stroke="#008080" stroke-width="1.5"/></g><g transform="translate(2,1)"><rect x="0" y="0" width="16" height="16" fill="#fff"/><rect x="1" y="1" width="14" height="14" fill="#107090"/><rect x="2" y="2" width="12" height="12" fill="#20a8e8"/><path d="M4.5 6Q5.5 4.5 7.5 4.5Q10 4.5 10 7V12.5M10 8H6.5Q4.5 8 4.5 10.2Q4.5 12.5 6.5 12.5H10" fill="none" stroke="#d8f0ff" stroke-width="1.6"/><rect x="11.5" y="4" width="1.5" height="9" fill="#204070"/></g><g transform="translate(4,20)"><rect x="0" y="0" width="16" height="17" fill="#000"/><rect x="1" y="1" width="14" height="15" fill="#0a80ff"/><path d="M1 6.5H15M6.5 1V16" fill="none" stroke="#fff" stroke-width="1.2"/><path d="M3.5 3.5H9.5V9.5H3.5Z" fill="none" stroke="#fff" stroke-width="1"/><rect x="6" y="6" width="1" height="1" fill="#fff"/><rect x="11.5" y="2.5" width="1.5" height="1.5" fill="#fff"/><rect x="11.5" y="8.5" width="1.5" height="1.5" fill="#fff"/><rect x="3" y="12" width="1.5" height="1.5" fill="#fff"/><rect x="9" y="12" width="1.5" height="1.5" fill="#fff"/><path d="M10 17L16 11V17Z" fill="#c0c0c0"/><path d="M10.5 16.5L15.5 11.5" fill="none" stroke="#000" stroke-width="1"/><path d="M10 16.5H16M15.5 11V17" fill="none" stroke="#000" stroke-width="1"/></g><g transform="translate(972,2)"><rect x="4" y="9" width="6" height="2" fill="#000"/></g><g transform="translate(988,2)"><rect x="5" y="2" width="6" height="6" fill="#000"/><rect x="6" y="4" width="4" height="3" fill="#c0c0c0"/><rect x="3" y="5" width="6" height="6" fill="#000"/><rect x="4" y="7" width="4" height="3" fill="#c0c0c0"/></g><g transform="translate(1006,2)"><path d="M4 3L11 10M11 3L4 10" fill="none" stroke="#000" stroke-width="1.6"/></g><g transform="translate(972,21)"><rect x="4" y="9" width="6" height="2" fill="#000"/></g><g transform="translate(988,21)"><rect x="5" y="2" width="6" height="6" fill="#000"/><rect x="6" y="4" width="4" height="3" fill="#c0c0c0"/><rect x="3" y="5" width="6" height="6" fill="#000"/><rect x="4" y="7" width="4" height="3" fill="#c0c0c0"/></g><g transform="translate(1006,21)"><path d="M4 3L11 10M11 3L4 10" fill="none" stroke="#000" stroke-width="1.6"/></g><g transform="translate(6,748)"><rect x="0" y="4" width="4" height="1" fill="#ff0000"/><rect x="0" y="7" width="4" height="1" fill="#0000ff"/><rect x="0" y="10" width="4" height="1" fill="#00c000"/><rect x="0" y="13" width="4" height="1" fill="#ffff00"/><path d="M5 2Q9 0 16 2V14Q9 12 5 14Z" fill="#000"/><path d="M6 3Q8 2 10 3V7Q8 6 6 7Z" fill="#ff0000"/><path d="M11 3Q13 2 15 3V7Q13 6 11 7Z" fill="#00c000"/><path d="M6 8Q8 7 10 8V12Q8 11 6 12Z" fill="#0000ff"/><path d="M11 8Q13 7 15 8V12Q13 11 11 12Z" fill="#ffff00"/></g><g transform="translate(74,747)"><path d="M1.5 4.5H15.5V12.5H1.5Z" fill="#ffffc0" stroke="#000" stroke-width="1"/><path d="M3 8Q3 2 9 3" fill="none" stroke="#4060ff" stroke-width="2"/><path d="M14 9Q14 15 8 14" fill="none" stroke="#4060ff" stroke-width="2"/><rect x="12" y="5" width="2" height="2" fill="#ff0000"/></g><g transform="translate(97,747)"><path d="M0.5 2.5H14.5V15.5H0.5Z" fill="#f0e8c0" stroke="#000" stroke-width="1"/><path d="M0 2L3 0H15L16 3V15L14 16Z" fill="#2080c0"/><path d="M3.5 5.5H9.5V12.5H3.5Z" fill="#f0e8c0" stroke="#000" stroke-width="1"/><path d="M8 9L14 1" fill="none" stroke="#ff8000" stroke-width="2"/><rect x="1" y="2" width="13" height="13" fill="none"/></g><g transform="translate(120,747)"><rect x="0" y="0" width="16" height="15" fill="#00e0e0"/><rect x="1" y="1" width="6" height="14" fill="#0000ff"/><rect x="9" y="1" width="6" height="14" fill="#0000ff"/><path d="M2 3H6M2 5H6M2 7H6M10 3H14M10 5H14M10 7H14" fill="none" stroke="#ffff00" stroke-width="1"/><path d="M0 16H16" fill="none" stroke="#0000ff" stroke-width="1" stroke-dasharray="1 1"/></g><g transform="translate(143,747)"><path d="M1 9L9 1H15L7 9L14 9L5 16L7 10Z" fill="#ffb000" stroke="#000" stroke-width="1"/><path d="M1 9L3 13L6 11" fill="none" stroke="#c0c0c0" stroke-width="1"/></g><g transform="translate(166,747)"><rect x="0" y="0" width="16" height="16" fill="#000080"/><rect x="2" y="2" width="12" height="12" fill="#fff"/><rect x="2" y="2" width="12" height="3" fill="#000080"/><path d="M3 5L5.5 13L8 7L10.5 13L13 5" fill="none" stroke="#000080" stroke-width="2"/></g><g transform="translate(189,747)"><rect x="0" y="3" width="16" height="11" fill="#000"/><rect x="1" y="4" width="14" height="9" fill="#008080"/><rect x="3" y="5" width="10" height="3" fill="#c0ffff"/><path d="M3 10H5M6 10H8M9 10H11M12 10H13M3 12H5M6 12H8M9 12H11" fill="none" stroke="#c0ffff" stroke-width="1"/></g><g transform="translate(212,747)"><path d="M2 10Q2 3 9 3Q15 3 15 9H5Q5 13 9 13Q12 13 13 11H15Q14 15 9 15Q2 15 2 10ZM5 7.5H12Q11 5 8.5 5Q6 5 5 7.5Z" fill="#1060e0"/><path d="M1 14Q-1 9 8 4Q15 -1 15 3" fill="none" stroke="#40a0ff" stroke-width="1.2"/></g><g transform="translate(235,747)"><rect x="0" y="0" width="16" height="16" fill="#008000"/><rect x="1.5" y="1.5" width="13" height="13" fill="#fff"/><path d="M3 3L13 13M13 3L3 13" fill="none" stroke="#008000" stroke-width="2.5"/><path d="M2 2H14V14H2Z" fill="none" stroke="#008000" stroke-width="1" stroke-dasharray="1 1"/></g><g transform="translate(283,747)"><rect x="0" y="0" width="16" height="16" fill="#107090"/><rect x="1" y="1" width="14" height="14" fill="#20a8e8"/><path d="M3.5 6Q4.5 4.5 6.5 4.5Q9 4.5 9 7V12.5M9 8H5.5Q3.5 8 3.5 10.2Q3.5 12.5 5.5 12.5H9" fill="none" stroke="#d8f0ff" stroke-width="1.6"/><rect x="10.5" y="4" width="1.5" height="9" fill="#204070"/></g><g transform="translate(851,747)"><rect x="0" y="1" width="16" height="14" fill="#fff"/><path d="M0.5 1.5H15.5V14.5H0.5Z" fill="none" stroke="#000" stroke-width="1"/><path d="M1 2L8 9L15 2M1 14L6 8M15 14L10 8" fill="none" stroke="#000" stroke-width="1"/><path d="M0 15Q6 7 16 9" fill="none" stroke="#ff0000" stroke-width="2"/></g><g transform="translate(869,747)"><path d="M1 5H4L8 1V15L4 11H1Z" fill="#ffff00" stroke="#000" stroke-width="1"/><path d="M10 5L13 3M10 8H14M10 11L13 13" fill="none" stroke="#808080" stroke-width="1"/></g><g transform="translate(887,747)"><rect x="0" y="7" width="16" height="7" fill="#000"/><rect x="1" y="8" width="14" height="5" fill="#c0c0c0"/><rect x="2" y="9" width="12" height="3" fill="#000"/><rect x="6" y="10" width="4" height="1" fill="#ff0000"/><path d="M9.5 0V7" fill="none" stroke="#000" stroke-width="1"/><rect x="9" y="0" width="3" height="1" fill="#000"/></g><g transform="translate(905,747)"><path d="M1 8Q1 3 8 3Q15 3 15 8Q15 13 8 13Q1 13 1 8Z" fill="#0000ff" stroke="#000" stroke-width="1"/><path d="M3 13L7 3M5 12Q6 8 7 6" fill="none" stroke="#808080" stroke-width="1.5"/><path d="M8 7H12V11H8Z" fill="none" stroke="#fff" stroke-width="1"/></g><g transform="translate(923,747)"><rect x="0" y="1" width="16" height="14" fill="#fff"/><path d="M0.5 1.5H15.5V14.5H0.5Z" fill="none" stroke="#000" stroke-width="1"/><path d="M1 2L15 14M15 2L1 14" fill="none" stroke="#000" stroke-width="1"/><path d="M2 14L9 7Q8 3 12 2L11 5L13 6L15 4Q15 8 11 9L4 16Z" fill="#ffff00" stroke="#000" stroke-width="1"/><rect x="1" y="14" width="2" height="2" fill="#ff0000"/></g><g transform="translate(941,747)"><rect x="0" y="0" width="16" height="16" fill="#000080"/><text x="0.5" y="13" font-size="12" fill="#fff" font-family="Liberation Sans">EN</text></g><g transform="translate(959,747)"><text x="-0.5" y="14" font-size="17" font-weight="bold" fill="#ff0000" font-family="Liberation Sans">@</text></g></svg>
</body></html>
